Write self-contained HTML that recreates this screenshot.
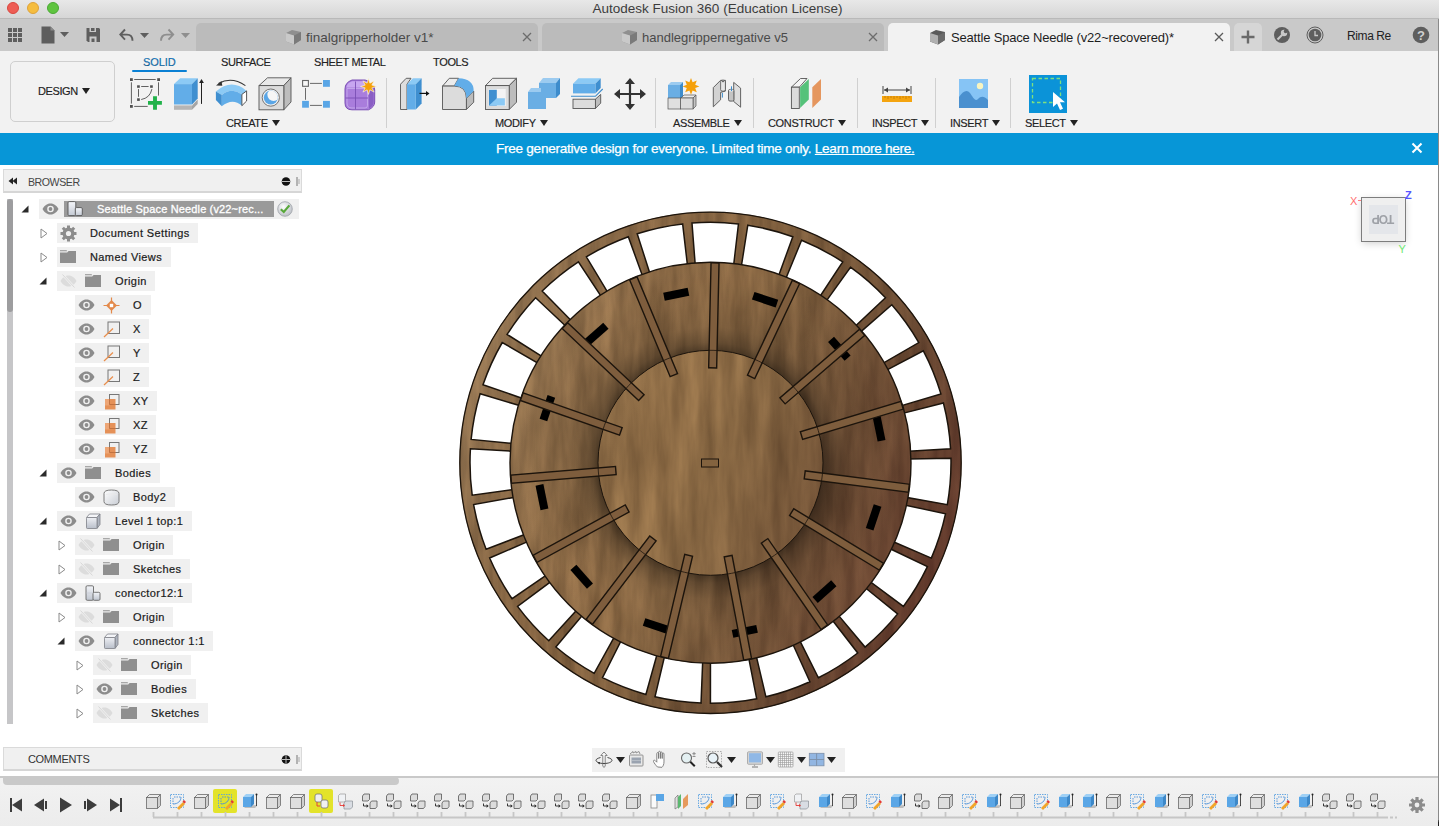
<!DOCTYPE html>
<html><head><meta charset="utf-8">
<style>
*{margin:0;padding:0;box-sizing:border-box}
html,body{width:1439px;height:826px;overflow:hidden;background:#fff;font-family:"Liberation Sans",sans-serif;position:relative}
.a{position:absolute}
#title{left:0;top:0;width:1439px;height:19px;background:linear-gradient(#e8e8e8,#d6d6d6);border-bottom:1px solid #b9b9b9}
#title .t{left:0;width:1435px;top:2px;text-align:center;font-size:13.5px;color:#3c3c3c;line-height:14px}
.tl{width:12px;height:12px;border-radius:50%;top:2px}
#tabbar{left:0;top:19px;width:1439px;height:32px;background:#c9c9c9}
.tab{top:4px;height:28px;background:#bbbbbb;border-radius:5px 5px 0 0}
.tab .n{top:7px;font-size:13px;color:#555;line-height:15px;white-space:nowrap}
#ribbon{left:0;top:51px;width:1439px;height:82px;background:#f2f2f2}
.lbl{font-size:11px;color:#222;line-height:12px;white-space:nowrap;-webkit-text-stroke:0.15px #222}
.sep{width:1px;background:#d0d0d0;top:27px;height:50px}
#banner{left:0;top:133px;width:1439px;height:32px;background:#0796d7;color:#fff}
.row{height:20px}
.rbg{background:#f0f0f0;height:20px}
.tx{font-size:11px;letter-spacing:0.4px;color:#1a1a1a;line-height:14px;white-space:nowrap;-webkit-text-stroke:0.2px #1a1a1a}
</style></head><body>

<!-- title bar -->
<div id="title" class="a">
  <div class="a tl" style="left:7px;background:#ee5d55;border:0.5px solid #d9473f"></div>
  <div class="a tl" style="left:27px;background:#f5bd3f;border:0.5px solid #dea23a"></div>
  <div class="a tl" style="left:47px;background:#5fc43f;border:0.5px solid #4aa934"></div>
  <div class="a t">Autodesk Fusion 360 (Education License)</div>
</div>

<!-- tab bar -->
<div id="tabbar" class="a">
  <!-- grid icon -->
  <svg class="a" style="left:7px;top:8px" width="16" height="16" viewBox="0 0 16 16"><g fill="#5e5e5e">
  <rect x="1" y="1" width="4" height="4"/><rect x="6" y="1" width="4" height="4"/><rect x="11" y="1" width="4" height="4"/>
  <rect x="1" y="6" width="4" height="4"/><rect x="6" y="6" width="4" height="4"/><rect x="11" y="6" width="4" height="4"/>
  <rect x="1" y="11" width="4" height="4"/><rect x="6" y="11" width="4" height="4"/><rect x="11" y="11" width="4" height="4"/></g></svg>
  <!-- file icon -->
  <svg class="a" style="left:40px;top:7px" width="30" height="18" viewBox="0 0 30 18"><path d="M1.5 0.5h9l4 4v13h-13z" fill="#5e5e5e"/><path d="M10.5 0.5v4h4" fill="#8a8a8a"/><path d="M20 6h9l-4.5 5z" fill="#5e5e5e"/></svg>
  <!-- save icon -->
  <svg class="a" style="left:85px;top:8px" width="16" height="16" viewBox="0 0 16 16"><path d="M1.5 1h12.5l1 1v13H3l-1.5-1.5z" fill="#5e5e5e"/><rect x="4.5" y="1" width="6.5" height="4" fill="#c9c9c9"/><rect x="6" y="1" width="3.5" height="3" fill="#5e5e5e"/><path d="M4.5 15V9.5h7V15M7 15v-3.5h2V15" fill="#c9c9c9"/><rect x="6.5" y="11.5" width="3" height="3.5" fill="#5e5e5e"/></svg>
  <!-- undo -->
  <svg class="a" style="left:118px;top:8px" width="36" height="16" viewBox="0 0 36 16"><path d="M7 2.5L2.3 7.6 7 12.7M2.5 7.6H9c3.5 0 5.5 2.5 5.5 6.2" fill="none" stroke="#5e5e5e" stroke-width="1.9"/><path d="M22 6h9l-4.5 5z" fill="#5e5e5e"/></svg>
  <!-- redo -->
  <svg class="a" style="left:159px;top:8px" width="36" height="16" viewBox="0 0 36 16"><path d="M9.5 2.5L14.2 7.6 9.5 12.7M14 7.6H7.5C4 7.6 2 10.1 2 13.8" fill="none" stroke="#8e8e8e" stroke-width="1.9"/><path d="M22 6h9l-4.5 5z" fill="#8e8e8e"/></svg>

  <div class="a tab" style="left:196px;width:342px">
    <svg class="a" style="left:89px;top:6px" width="17" height="16" viewBox="0 0 17 16"><path d="M1 4l6-3 9 2v8l-7 4.5-8-3z" fill="#8f8f8f"/><path d="M1 4l8 2.5v9l-8-3z" fill="#c9c9c9"/><path d="M9 6.5l7-3.5v8l-7 4.5z" fill="#7a7a7a"/></svg>
    <div class="a n" style="left:110px;font-size:13.5px;color:#4a4a4a">finalgripperholder v1*</div>
    <svg class="a" style="left:326px;top:9px" width="10" height="10" viewBox="0 0 10 10"><path d="M1 1l8 8M9 1l-8 8" stroke="#6c6c6c" stroke-width="1.3"/></svg>
  </div>
  <div class="a tab" style="left:542px;width:342px">
    <svg class="a" style="left:79px;top:6px" width="17" height="16" viewBox="0 0 17 16"><path d="M1 4l6-3 9 2v8l-7 4.5-8-3z" fill="#8f8f8f"/><path d="M1 4l8 2.5v9l-8-3z" fill="#c9c9c9"/><path d="M9 6.5l7-3.5v8l-7 4.5z" fill="#7a7a7a"/></svg>
    <div class="a n" style="left:100px;color:#4a4a4a">handlegrippernegative v5</div>
    <svg class="a" style="left:326px;top:9px" width="10" height="10" viewBox="0 0 10 10"><path d="M1 1l8 8M9 1l-8 8" stroke="#6c6c6c" stroke-width="1.3"/></svg>
  </div>
  <div class="a tab" style="left:888px;width:342px;background:#f2f2f2">
    <svg class="a" style="left:41px;top:6px" width="17" height="16" viewBox="0 0 17 16"><path d="M1 4l6-3 9 2v8l-7 4.5-8-3z" fill="#5a5a5a"/><path d="M1 4l8 2.5v9l-8-3z" fill="#b0b0b0"/><path d="M9 6.5l7-3.5v8l-7 4.5z" fill="#6a6a6a"/></svg>
    <div class="a n" style="left:63px;color:#1e1e1e;letter-spacing:-0.18px">Seattle Space Needle (v22~recovered)*</div>
    <svg class="a" style="left:326px;top:9px" width="10" height="10" viewBox="0 0 10 10"><path d="M1 1l8 8M9 1l-8 8" stroke="#5a5a5a" stroke-width="1.3"/></svg>
  </div>
  <div class="a tab" style="left:1234px;width:28px;background:#d6d6d6">
    <svg class="a" style="left:7px;top:7px" width="14" height="14" viewBox="0 0 14 14"><path d="M7 0.5v13M0.5 7h13" stroke="#6a6a6a" stroke-width="2.4"/></svg>
  </div>
  <!-- wrench -->
  <svg class="a" style="left:1273px;top:7px" width="18" height="18" viewBox="0 0 18 18"><circle cx="9" cy="9" r="8" fill="#5e5e5e"/><path d="M4.5 13.5l4.5-4.5" stroke="#c9c9c9" stroke-width="2.2"/><circle cx="11" cy="7" r="3.2" fill="#c9c9c9"/><circle cx="12.6" cy="5.4" r="1.8" fill="#5e5e5e"/></svg>
  <!-- clock -->
  <svg class="a" style="left:1306px;top:7px" width="18" height="18" viewBox="0 0 18 18"><circle cx="9" cy="9" r="8" fill="none" stroke="#5e5e5e" stroke-width="1"/><circle cx="9" cy="9" r="6.3" fill="#5e5e5e"/><path d="M9 5v4.5h3" fill="none" stroke="#c9c9c9" stroke-width="1.3"/></svg>
  <div class="a" style="left:1347px;top:10px;font-size:12px;color:#222;letter-spacing:-0.4px;line-height:14px">Rima Re</div>
  <!-- help -->
  <svg class="a" style="left:1412px;top:7px" width="18" height="18" viewBox="0 0 18 18"><circle cx="9" cy="9" r="8.3" fill="#5e5e5e"/><text x="9" y="13.6" text-anchor="middle" font-family="Liberation Sans" font-weight="bold" font-size="13" fill="#d0d0d0">?</text></svg>
</div>

<!-- ribbon -->
<div id="ribbon" class="a">
<div class="a" style="left:10px;top:10px;width:105px;height:61px;border:1px solid #cfcfcf;border-radius:5px;background:#f2f2f2"></div>
<div class="a lbl" style="left:38px;top:34px;letter-spacing:-0.4px;color:#222">DESIGN<span style="display:inline-block;width:0;height:0;border-left:4.5px solid transparent;border-right:4.5px solid transparent;border-top:6px solid #222;margin-left:4px;vertical-align:1px"></span></div>
<div class="a lbl" style="left:143px;top:5px;letter-spacing:-0.1px;color:#0b7fcf">SOLID</div>
<div class="a" style="left:132px;top:19px;width:55px;height:2.2px;background:#0a80d4;border-radius:1px"></div>
<div class="a lbl" style="left:221px;top:5px;letter-spacing:-0.35px;color:#222">SURFACE</div>
<div class="a lbl" style="left:314px;top:5px;letter-spacing:-0.35px;color:#222">SHEET METAL</div>
<div class="a lbl" style="left:433px;top:5px;letter-spacing:-0.35px;color:#222">TOOLS</div>
<svg class="a" style="left:130px;top:26px" width="33" height="34" viewBox="0 0 33 34">
<g fill="#505050"><rect x="0" y="1.2" width="2.8" height="2.8"/><rect x="27.2" y="1.2" width="2.8" height="2.8"/><rect x="0" y="28" width="2.8" height="2.8"/>
<rect x="7.1" y="8.3" width="2.7" height="2.5"/><rect x="20.1" y="8.3" width="2.7" height="2.5"/><rect x="7.1" y="21.3" width="2.7" height="2.6"/></g>
<path d="M4.2 2.5H25.7M1.4 5.3V26.6M28.5 5.3V18.6M4.2 29.4H17.7M11.2 9.5H18.6M8.5 12.1V19.8" stroke="#606060" stroke-width="1"/>
<path d="M21.9 12.1Q20 21 11.2 22.5" fill="none" stroke="#606060" stroke-width="1"/>
<path d="M25 19.2V32.8M18 25.9H31.9" stroke="#21b24a" stroke-width="3.9"/>
</svg>
<svg class="a" style="left:173px;top:26px" width="32" height="34" viewBox="0 0 32 34">
<path d="M1 7.1L7.2 1.2H24.7L19 7.1Z" fill="#8ccaf5"/><path d="M19 7.1L24.7 1.2V21.6L19 27.5Z" fill="#3f8fd0"/><rect x="1" y="7.1" width="18" height="20.4" fill="#62ade8"/>
<rect x="1" y="28.4" width="18" height="4.4" fill="#b5b5b5"/><path d="M19 28.4L24.7 22.5V26.9L19 32.8Z" fill="#a5a5a5"/>
<path d="M28.5 26.9V5" stroke="#222" stroke-width="1"/><path d="M26.1 6L28.5 2.1 30.9 6Z" fill="#222"/>
</svg>
<svg class="a" style="left:215px;top:26px" width="34" height="33" viewBox="0 0 34 33">
<path d="M3.5 6.5Q16.5 -1 30.4 8.6" fill="none" stroke="#333" stroke-width="1.1"/><path d="M1 8.5l5.5-4.5 0.8 4.8z" fill="#333"/>
<path d="M0.9 14.5Q16.5 1 31.6 13.9L26.9 17.4Q16.9 10 6.8 18Z" fill="#8ccaf5"/>
<path d="M0.9 14.5L6.8 18V29.3L0.9 23Z" fill="#3f8fd0"/>
<path d="M6.8 18Q16.9 10 26.9 17.4V28.7Q17.4 20.5 6.8 29.3Z" fill="#62ade8"/>
<path d="M26.9 17.4L31.6 13.9V24L26.9 28.7Z" fill="#fff" stroke="#444" stroke-width="0.9"/>
</svg>
<svg class="a" style="left:258px;top:26px" width="34" height="34" viewBox="0 0 34 34">
<path d="M1 8.6L9.5 0.8H33L25.8 8.6Z" fill="#e9e9e9" stroke="#555" stroke-width="0.9"/>
<path d="M25.8 8.6L33 0.8V25L25.8 32.8Z" fill="#bdbdbd" stroke="#555" stroke-width="0.9"/>
<rect x="1" y="8.6" width="24.8" height="24.2" fill="#dcdcdc" stroke="#555" stroke-width="0.9"/>
<circle cx="12.8" cy="20.6" r="8.6" fill="#f0f0f0" stroke="#666" stroke-width="0.9"/>
<defs><clipPath id="holeclip"><circle cx="12.8" cy="20.6" r="7"/></clipPath></defs><circle cx="12.8" cy="20.6" r="7" fill="#5aa6e6"/>
<circle cx="15.6" cy="17.8" r="6.2" fill="#f6f6f6" clip-path="url(#holeclip)"/>
</svg>
<svg class="a" style="left:302px;top:28px" width="30" height="30" viewBox="0 0 30 30">
<rect x="0.6" y="1.5" width="5.8" height="5.8" fill="#f8f8f8" stroke="#666" stroke-width="1.1"/><rect x="21" y="1" width="6.9" height="6.8" fill="#5aa6e6"/><rect x="0.1" y="21.9" width="6.8" height="6.8" fill="#5aa6e6"/><rect x="21" y="21.9" width="6.9" height="6.8" fill="#5aa6e6"/>
<path d="M8 4.4H19.9M3.5 9V20.8M8 26.4H19.9" stroke="#6a6a6a" stroke-width="1"/>
</svg>
<svg class="a" style="left:344px;top:26px" width="34" height="34" viewBox="0 0 34 34">
<path d="M1 12Q1 5.5 8 3H21Q24 3 25 6V9H29Q30.7 10 30.7 13V25Q30.7 30 24.5 32.8H8Q1 32.8 1 26Z" fill="#a97ddc" stroke="#7b4fb4" stroke-width="1"/>
<path d="M2.3 10.5Q3 5.5 8.5 4.2H20.5Q23 4.4 23.5 7V10.5Z" fill="#c7a6f0"/>
<path d="M24.5 10H29.6V25Q29.6 29 25 31.6Z" fill="#8a5fc4"/>
<path d="M3 11.5H23.5V28.5Q23.5 31 21 31H8Q3 31 3 26Z" fill="#a97ddc" stroke="#c9b0ee" stroke-width="0.8"/>
<path d="M11.5 4.5V32.3M1.5 21H24" stroke="#7b4fb4" stroke-width="0.9"/>
<path d="M24.50 1.60L25.88 6.17L30.09 3.91L27.83 8.12L32.40 9.50L27.83 10.88L30.09 15.09L25.88 12.83L24.50 17.40L23.12 12.83L18.91 15.09L21.17 10.88L16.60 9.50L21.17 8.12L18.91 3.91L23.12 6.17Z" fill="#f5a00a" stroke="#f7f0e0" stroke-width="0.7"/>
</svg>
<div class="a lbl" style="left:226px;top:66px;letter-spacing:-0.35px;color:#222">CREATE<span style="display:inline-block;width:0;height:0;border-left:4.5px solid transparent;border-right:4.5px solid transparent;border-top:6px solid #222;margin-left:4px;vertical-align:1px"></span></div>
<div class="a sep" style="left:386px"></div>
<svg class="a" style="left:400px;top:26px" width="32" height="34" viewBox="0 0 32 34">
<path d="M0.5 32.5V7.2L6.2 1.3H11L7 7.2V32.5Z" fill="#dedede" stroke="#555" stroke-width="0.9" stroke-linejoin="round"/>
<path d="M7 7.2L12.9 1.3H21.6L15.8 7.2Z" fill="#8ccaf5"/><path d="M15.8 7.2L21.6 1.3V26.6L15.8 32.5Z" fill="#3f8fd0"/><rect x="7" y="7.2" width="8.8" height="25.3" fill="#62ade8"/>
<path d="M19.5 16.4H27" stroke="#111" stroke-width="1.2"/><path d="M26 13.9L29.5 16.4 26 18.9Z" fill="#111"/>
</svg>
<svg class="a" style="left:441px;top:26px" width="34" height="34" viewBox="0 0 34 34">
<path d="M1.5 9.1L8.3 1.3H17.6L13.2 9.1Z" fill="#ececec" stroke="#555" stroke-width="0.9" stroke-linejoin="round"/>
<path d="M25.4 21.3L32.7 14V25.2L25.4 32.5Z" fill="#bdbdbd" stroke="#555" stroke-width="0.9" stroke-linejoin="round"/>
<path d="M1.5 9.1H13.2Q25.4 9.1 25.4 21.3V32.5H1.5Z" fill="#dcdcdc" stroke="#555" stroke-width="0.9" stroke-linejoin="round"/>
<path d="M13.2 9.1L17.6 1.3Q32.7 1.8 32.7 14L25.4 21.3Q25.4 9.1 13.2 9.1Z" fill="#62ade8"/>
</svg>
<svg class="a" style="left:485px;top:26px" width="33" height="34" viewBox="0 0 33 34">
<path d="M0.5 8.6L7.6 1.3H31.5L24.2 8.6Z" fill="#ececec" stroke="#555" stroke-width="0.9" stroke-linejoin="round"/>
<path d="M24.2 8.6L31.5 1.3V25.2L24.2 32.5Z" fill="#bdbdbd" stroke="#555" stroke-width="0.9" stroke-linejoin="round"/>
<rect x="0.5" y="8.6" width="23.7" height="23.9" fill="#dcdcdc" stroke="#555" stroke-width="0.9"/>
<rect x="3.7" y="12" width="17" height="17" fill="#f4f4f4"/><rect x="4" y="12.8" width="7.8" height="15.8" fill="#3f8fd0"/><path d="M4 28.6L11.8 21.3H19.9V28.6Z" fill="#8ccaf5"/>
</svg>
<svg class="a" style="left:527px;top:26px" width="34" height="33" viewBox="0 0 34 33"><path d="M12 6l4-5h17l-4 5z" fill="#9ccbf0"/><path d="M29 6l4-5v16l-4 4z" fill="#3d8ccc"/><rect x="12" y="6" width="17" height="15" fill="#6aaee4"/>
<path d="M1 15l3-4h10v4z" fill="#9ccbf0"/><path d="M19 21l-4 5v6l4-5z" fill="#3d8ccc"/><rect x="1" y="15" width="18" height="17" fill="#6aaee4"/></svg>
<svg class="a" style="left:571px;top:26px" width="33" height="33" viewBox="0 0 33 33">
<path d="M2 6.7L7.4 1.3H29.7L24.4 6.7Z" fill="#8ccaf5"/><path d="M24.4 6.7L29.7 1.3V11L24.4 16.4Z" fill="#3f8fd0"/><rect x="2" y="6.7" width="22.4" height="9.7" fill="#62ade8"/>
<path d="M0 19.3H24.4L31.7 12" fill="none" stroke="#3d8ccc" stroke-width="1.1"/>
<path d="M24.4 22.2L29.7 17.4V26.1L24.4 31.5Z" fill="#bdbdbd" stroke="#555" stroke-width="0.9" stroke-linejoin="round"/><rect x="2" y="22.2" width="22.4" height="9.3" fill="#dcdcdc" stroke="#555" stroke-width="0.9"/>
</svg>
<svg class="a" style="left:614px;top:27px" width="32" height="32" viewBox="0 0 32 32"><path d="M16 3v26M3 16h26" stroke="#333" stroke-width="2.2"/><path d="M16 0l5 6H11zM16 32l5-6H11zM0 16l6-5v10zM32 16l-6-5v10z" fill="#333"/></svg>
<div class="a lbl" style="left:495px;top:66px;letter-spacing:-0.35px;color:#222">MODIFY<span style="display:inline-block;width:0;height:0;border-left:4.5px solid transparent;border-right:4.5px solid transparent;border-top:6px solid #222;margin-left:4px;vertical-align:1px"></span></div>
<div class="a sep" style="left:655px"></div>
<svg class="a" style="left:667px;top:26px" width="33" height="33" viewBox="0 0 33 33"><path d="M1 8l3-3h12l-3 3z" fill="#9ccbf0"/><path d="M13 8l3-3v15l-3 3z" fill="#3d8ccc"/><rect x="1" y="8" width="12" height="15" fill="#6aaee4"/>
<path d="M14 21l3-3h12l-3 3z" fill="#ececec" stroke="#555" stroke-width="0.7"/><path d="M26 21l3-3v11l-3 3z" fill="#c4c4c4" stroke="#555" stroke-width="0.7"/>
<rect x="1" y="21" width="12.5" height="11" fill="#e0e0e0" stroke="#555" stroke-width="0.7"/><rect x="13.5" y="21" width="12.5" height="11" fill="#dcdcdc" stroke="#555" stroke-width="0.7"/>
<path d="M24 1l1.6 4.2 4.2-1.6-1.6 4.2 4.2 1.6-4.2 1.6 1.6 4.2-4.2-1.6L24 17.8l-1.6-4.2-4.2 1.6 1.6-4.2-4.2-1.6 4.2-1.6-1.6-4.2 4.2 1.6z" fill="#f5a00a"/></svg>
<svg class="a" style="left:712px;top:26px" width="30" height="33" viewBox="0 0 30 33">
<path d="M1.3 29.8V10.6L8.6 3.3H13.4V14.1L8.6 15.4V22.8Z" fill="#d2d2d2" stroke="#555" stroke-width="0.9" stroke-linejoin="round"/>
<rect x="8.6" y="3.3" width="4.8" height="10.8" rx="1.5" fill="#e6e6e6" stroke="#555" stroke-width="0.8"/><ellipse cx="11" cy="4.6" rx="1.2" ry="0.7" fill="#555"/>
<path d="M10.4 15.9V20.6" stroke="#3d8ccc" stroke-width="1"/>
<path d="M21.7 5.4L28.6 11.1V30.2L21.7 24.5Z" fill="#dedede" stroke="#555" stroke-width="0.9" stroke-linejoin="round"/>
<rect x="16.5" y="12.4" width="5.4" height="11.7" rx="1.5" fill="#c4c4c4" stroke="#555" stroke-width="0.9"/><ellipse cx="19.2" cy="13.6" rx="2.3" ry="1.1" fill="#e8e8e8"/>
<path d="M19.5 9.3V14.1" stroke="#3d8ccc" stroke-width="1"/>
</svg>
<div class="a lbl" style="left:673px;top:66px;letter-spacing:-0.35px;color:#222">ASSEMBLE<span style="display:inline-block;width:0;height:0;border-left:4.5px solid transparent;border-right:4.5px solid transparent;border-top:6px solid #222;margin-left:4px;vertical-align:1px"></span></div>
<div class="a sep" style="left:753px"></div>
<svg class="a" style="left:790px;top:26px" width="32" height="33" viewBox="0 0 32 33">
<path d="M1.4 10.2L10.5 1.5H17L9.3 10.2Z" fill="#f4f4f4" stroke="#555" stroke-width="0.9" stroke-linejoin="round"/>
<rect x="1.4" y="10.2" width="7.9" height="21.3" fill="#dcdcdc" stroke="#555" stroke-width="0.9"/>
<path d="M10.1 10.2L18.8 2V22.4L10.1 31.1Z" fill="#55c27a"/>
<path d="M22.3 10.2L31 2V22.4L22.3 31.1Z" fill="#e5965e"/>
</svg>
<div class="a lbl" style="left:768px;top:66px;letter-spacing:-0.35px;color:#222">CONSTRUCT<span style="display:inline-block;width:0;height:0;border-left:4.5px solid transparent;border-right:4.5px solid transparent;border-top:6px solid #222;margin-left:4px;vertical-align:1px"></span></div>
<div class="a sep" style="left:857px"></div>
<svg class="a" style="left:882px;top:34px" width="30" height="18" viewBox="0 0 30 18"><path d="M1 1v8M29 1v8M2 5h26" stroke="#444" stroke-width="1"/><path d="M2 5l4-2.5v5zM28 5l-4-2.5v5z" fill="#444"/>
<rect x="0" y="11" width="30" height="6" fill="#f4a40f"/><path d="M3 11v2M6 11v3M9 11v2M12 11v3M15 11v2M18 11v3M21 11v2M24 11v3M27 11v2" stroke="#c07a05" stroke-width="0.8"/></svg>
<div class="a lbl" style="left:872px;top:66px;letter-spacing:-0.35px;color:#222">INSPECT<span style="display:inline-block;width:0;height:0;border-left:4.5px solid transparent;border-right:4.5px solid transparent;border-top:6px solid #222;margin-left:4px;vertical-align:1px"></span></div>
<div class="a sep" style="left:935px"></div>
<svg class="a" style="left:959px;top:28px" width="29" height="29" viewBox="0 0 29 29"><rect x="0" y="0" width="29" height="29" fill="#86c4f5"/><path d="M0 18c4-6 8-8 11-4 3 4 5 9 8 6 3-3 6-3 10 1v8H0z" fill="#4a90cf"/><circle cx="21" cy="7" r="3.2" fill="#f8f4c0"/></svg>
<div class="a lbl" style="left:950px;top:66px;letter-spacing:-0.35px;color:#222">INSERT<span style="display:inline-block;width:0;height:0;border-left:4.5px solid transparent;border-right:4.5px solid transparent;border-top:6px solid #222;margin-left:4px;vertical-align:1px"></span></div>
<div class="a sep" style="left:1010px"></div>
<svg class="a" style="left:1029px;top:24px" width="38" height="38" viewBox="0 0 38 38"><rect x="0" y="0" width="38" height="38" fill="#0b93d8"/><rect x="3.5" y="3.5" width="28" height="24" fill="none" stroke="#7fe07f" stroke-width="1.3" stroke-dasharray="3.5 2.5"/>
<path d="M24 17v15l4-3.5 3 6.5 3-1.3-3-6.5h5z" fill="#fff"/></svg>
<div class="a lbl" style="left:1025px;top:66px;letter-spacing:-0.35px;color:#222">SELECT<span style="display:inline-block;width:0;height:0;border-left:4.5px solid transparent;border-right:4.5px solid transparent;border-top:6px solid #222;margin-left:4px;vertical-align:1px"></span></div>
</div>

<!-- banner -->
<div id="banner" class="a">
  <div class="a" style="left:496px;top:8px;font-size:13.6px;line-height:16px;letter-spacing:-0.28px;white-space:nowrap;-webkit-text-stroke:0.25px #fff">Free generative design for everyone. Limited time only. <u>Learn more here.</u></div>
  <svg class="a" style="left:1411px;top:9px" width="12" height="12" viewBox="0 0 12 12"><path d="M1.5 1.5l9 9M10.5 1.5l-9 9" stroke="#fff" stroke-width="2.1"/></svg>
</div>

<!-- WHEEL START -->
<svg class="a" style="left:0;top:0" width="1439" height="826" viewBox="0 0 1439 826">
<defs>
<filter id="wA" x="455" y="205" width="512" height="516" filterUnits="userSpaceOnUse" color-interpolation-filters="sRGB">
 <feTurbulence type="fractalNoise" baseFrequency="0.08 0.012" numOctaves="4" seed="3"/>
 <feColorMatrix type="matrix" values="0.26 0 0 0 0.3900  0.21 0 0 0 0.2850  0.15 0 0 0 0.1800  0 0 0 0 1"/>
</filter>
<filter id="wB" x="455" y="205" width="512" height="516" filterUnits="userSpaceOnUse" color-interpolation-filters="sRGB">
 <feTurbulence type="fractalNoise" baseFrequency="0.075 0.011" numOctaves="4" seed="11"/>
 <feColorMatrix type="matrix" values="0.26 0 0 0 0.4200  0.21 0 0 0 0.3100  0.15 0 0 0 0.1950  0 0 0 0 1"/>
</filter>
<filter id="wC" x="455" y="205" width="512" height="516" filterUnits="userSpaceOnUse" color-interpolation-filters="sRGB">
 <feTurbulence type="fractalNoise" baseFrequency="0.07 0.01" numOctaves="4" seed="21"/>
 <feColorMatrix type="matrix" values="0.24 0 0 0 0.4500  0.2 0 0 0 0.3350  0.14 0 0 0 0.2100  0 0 0 0 1"/>
</filter>
<linearGradient id="light" x1="480" y1="380" x2="940" y2="560" gradientUnits="userSpaceOnUse">
 <stop offset="0" stop-color="#fff0c8" stop-opacity="0.12"/>
 <stop offset="0.42" stop-color="#000" stop-opacity="0"/>
 <stop offset="1" stop-color="#3a0a14" stop-opacity="0.46"/>
</linearGradient>
<radialGradient id="midshade" cx="710.5" cy="462.8" r="200.5" gradientUnits="userSpaceOnUse">
 <stop offset="0.56" stop-color="#000" stop-opacity="0.45"/>
 <stop offset="0.6" stop-color="#000" stop-opacity="0.28"/>
 <stop offset="0.68" stop-color="#000" stop-opacity="0.1"/>
 <stop offset="0.8" stop-color="#000" stop-opacity="0.02"/>
 <stop offset="1" stop-color="#000" stop-opacity="0"/>
</radialGradient>
<clipPath id="cOut"><circle cx="710.5" cy="462.8" r="251.0"/></clipPath>
<clipPath id="cMid"><circle cx="710.5" cy="462.8" r="200.5"/></clipPath>
<clipPath id="cIn"><circle cx="710.5" cy="462.8" r="112.5"/></clipPath>
</defs>
<g clip-path="url(#cOut)"><rect x="455" y="205" width="512" height="516" filter="url(#wA)"/></g>
<circle cx="710.5" cy="462.8" r="250.7" fill="url(#light)" stroke="#1c140c" stroke-width="1.3"/>
<path d="M741.28 266.70 L747.79 225.21 A240.5 240.5 0 0 1 792.81 236.82 L778.43 276.29 Z M785.67 279.08 L801.58 240.21 A240.5 240.5 0 0 1 842.70 261.90 L819.62 296.98 Z M826.01 301.37 L850.46 267.22 A240.5 240.5 0 0 1 885.47 297.80 L854.92 326.61 Z M860.13 332.36 L891.79 304.76 A240.5 240.5 0 0 1 918.81 342.60 L882.43 363.59 Z M886.18 370.39 L923.35 350.83 A240.5 240.5 0 0 1 940.91 393.88 L900.67 405.91 Z M902.75 413.39 L943.43 402.94 A240.5 240.5 0 0 1 950.60 448.87 L908.67 451.30 Z M908.96 459.06 L950.96 458.27 A240.5 240.5 0 0 1 947.34 504.62 L905.98 497.31 Z M904.48 504.93 L945.52 513.84 A240.5 240.5 0 0 1 931.31 558.11 L892.75 541.46 Z M889.53 548.53 L927.41 566.67 A240.5 240.5 0 0 1 903.38 606.46 L869.69 581.37 Z M864.94 587.50 L897.61 613.89 A240.5 240.5 0 0 1 865.05 647.07 L838.06 614.89 Z M832.02 619.76 L857.73 652.97 A240.5 240.5 0 0 1 818.39 677.74 L799.55 640.21 Z M792.54 643.55 L809.90 681.80 A240.5 240.5 0 0 1 765.91 696.83 L756.23 655.96 Z M748.65 657.60 L756.72 698.82 A240.5 240.5 0 0 1 710.44 703.30 L710.45 661.30 Z M702.70 661.15 L701.04 703.11 A240.5 240.5 0 0 1 654.98 696.80 L664.68 655.94 Z M657.16 654.00 L645.88 694.46 A240.5 240.5 0 0 1 602.51 677.69 L621.37 640.17 Z M614.51 636.55 L594.20 673.31 A240.5 240.5 0 0 1 555.87 647.00 L582.87 614.83 Z M577.03 609.73 L548.79 640.81 A240.5 240.5 0 0 1 517.56 606.37 L551.25 581.30 Z M546.74 574.98 L512.09 598.72 A240.5 240.5 0 0 1 489.65 558.01 L528.22 541.38 Z M525.28 534.19 L486.09 549.30 A240.5 240.5 0 0 1 473.64 504.51 L515.01 497.22 Z M513.81 489.56 L472.19 495.22 A240.5 240.5 0 0 1 470.41 448.76 L512.34 451.21 Z M512.94 443.48 L471.14 439.39 A240.5 240.5 0 0 1 480.12 393.77 L520.35 405.83 Z M522.72 398.44 L482.99 384.82 A240.5 240.5 0 0 1 502.25 342.50 L538.62 363.51 Z M542.63 356.87 L507.11 334.45 A240.5 240.5 0 0 1 535.61 297.72 L566.15 326.55 Z M571.58 321.01 L542.19 291.01 A240.5 240.5 0 0 1 578.39 261.83 L601.46 296.93 Z M608.03 292.80 L586.35 256.82 A240.5 240.5 0 0 1 628.30 236.78 L642.65 276.26 Z M650.00 273.75 L637.19 233.74 A240.5 240.5 0 0 1 682.64 223.92 L687.50 265.64 Z M695.23 264.89 L691.99 223.01 A240.5 240.5 0 0 1 738.48 223.93 L733.59 265.65 Z" fill="#fff" stroke="#1c140c" stroke-width="1.5"/>
<g clip-path="url(#cMid)"><rect x="455" y="205" width="512" height="516" filter="url(#wB)"/></g>
<circle cx="710.5" cy="462.8" r="200.5" fill="url(#light)"/>
<circle cx="710.5" cy="462.8" r="200.5" fill="url(#midshade)" stroke="#1c140c" stroke-width="1.4"/>
<g clip-path="url(#cIn)"><rect x="455" y="205" width="512" height="516" filter="url(#wC)"/></g>
<circle cx="710.5" cy="462.8" r="112.5" fill="url(#light)" stroke="#1c140c" stroke-width="1"/>
<rect x="752.58" y="295.69" width="25" height="8" fill="#000" transform="rotate(18.50 765.08 299.69)"/>
<rect x="826.82" y="344.83" width="25" height="8" fill="#000" transform="rotate(48.50 839.32 348.83)"/>
<rect x="866.55" y="424.51" width="25" height="8" fill="#000" transform="rotate(78.50 879.05 428.51)"/>
<rect x="861.11" y="513.38" width="25" height="8" fill="#000" transform="rotate(108.50 873.61 517.38)"/>
<rect x="811.97" y="587.62" width="25" height="8" fill="#000" transform="rotate(138.50 824.47 591.62)"/>
<rect x="732.29" y="627.35" width="25" height="8" fill="#000" transform="rotate(168.50 744.79 631.35)"/>
<rect x="643.42" y="621.91" width="25" height="8" fill="#000" transform="rotate(198.50 655.92 625.91)"/>
<rect x="569.18" y="572.77" width="25" height="8" fill="#000" transform="rotate(228.50 581.68 576.77)"/>
<rect x="529.45" y="493.09" width="25" height="8" fill="#000" transform="rotate(258.50 541.95 497.09)"/>
<rect x="534.89" y="404.22" width="25" height="8" fill="#000" transform="rotate(288.50 547.39 408.22)"/>
<rect x="584.03" y="329.98" width="25" height="8" fill="#000" transform="rotate(318.50 596.53 333.98)"/>
<rect x="663.71" y="290.25" width="25" height="8" fill="#000" transform="rotate(348.50 676.21 294.25)"/>
<rect x="709.85" y="262.84" width="8" height="105" fill="#7e5d3d" stroke="#1c140c" stroke-width="1.4" transform="rotate(1.30 713.85 315.34)"/>
<path d="M708.93 350.31 A112.5 112.5 0 0 1 717.17 350.50" fill="none" stroke="#1c140c" stroke-width="0.8"/>
<rect x="769.54" y="276.95" width="8" height="105" fill="#7e5d3d" stroke="#1c140c" stroke-width="1.4" transform="rotate(25.30 773.54 329.45)"/>
<path d="M754.82 359.40 A112.5 112.5 0 0 1 762.27 362.92" fill="none" stroke="#1c140c" stroke-width="0.8"/>
<rect x="818.32" y="314.12" width="8" height="105" fill="#7e5d3d" stroke="#1c140c" stroke-width="1.4" transform="rotate(49.30 822.32 366.62)"/>
<path d="M793.04 386.36 A112.5 112.5 0 0 1 798.42 392.61" fill="none" stroke="#1c140c" stroke-width="0.8"/>
<rect x="847.78" y="367.91" width="8" height="105" fill="#7e5d3d" stroke="#1c140c" stroke-width="1.4" transform="rotate(73.30 851.78 420.41)"/>
<path d="M817.00 426.55 A112.5 112.5 0 0 1 819.37 434.44" fill="none" stroke="#1c140c" stroke-width="0.8"/>
<rect x="852.80" y="429.04" width="8" height="105" fill="#7e5d3d" stroke="#1c140c" stroke-width="1.4" transform="rotate(97.30 856.80 481.54)"/>
<path d="M822.54 473.00 A112.5 112.5 0 0 1 821.49 481.17" fill="none" stroke="#1c140c" stroke-width="0.8"/>
<rect x="832.53" y="486.93" width="8" height="105" fill="#7e5d3d" stroke="#1c140c" stroke-width="1.4" transform="rotate(121.30 836.53 539.43)"/>
<path d="M808.70 517.68 A112.5 112.5 0 0 1 804.42 524.73" fill="none" stroke="#1c140c" stroke-width="0.8"/>
<rect x="790.47" y="531.57" width="8" height="105" fill="#7e5d3d" stroke="#1c140c" stroke-width="1.4" transform="rotate(145.30 794.47 584.07)"/>
<path d="M777.89 552.88 A112.5 112.5 0 0 1 771.11 557.58" fill="none" stroke="#1c140c" stroke-width="0.8"/>
<rect x="733.89" y="555.24" width="8" height="105" fill="#7e5d3d" stroke="#1c140c" stroke-width="1.4" transform="rotate(169.30 737.89 607.74)"/>
<path d="M735.42 572.50 A112.5 112.5 0 0 1 727.32 574.04" fill="none" stroke="#1c140c" stroke-width="0.8"/>
<rect x="672.57" y="553.84" width="8" height="105" fill="#7e5d3d" stroke="#1c140c" stroke-width="1.4" transform="rotate(193.30 676.57 606.34)"/>
<path d="M688.65 573.16 A112.5 112.5 0 0 1 680.62 571.26" fill="none" stroke="#1c140c" stroke-width="0.8"/>
<rect x="617.12" y="527.63" width="8" height="105" fill="#7e5d3d" stroke="#1c140c" stroke-width="1.4" transform="rotate(217.30 621.12 580.13)"/>
<path d="M645.65 554.73 A112.5 112.5 0 0 1 639.09 549.73" fill="none" stroke="#1c140c" stroke-width="0.8"/>
<rect x="577.12" y="481.13" width="8" height="105" fill="#7e5d3d" stroke="#1c140c" stroke-width="1.4" transform="rotate(241.30 581.12 533.63)"/>
<path d="M613.87 520.40 A112.5 112.5 0 0 1 609.91 513.17" fill="none" stroke="#1c140c" stroke-width="0.8"/>
<rect x="559.50" y="422.39" width="8" height="105" fill="#7e5d3d" stroke="#1c140c" stroke-width="1.4" transform="rotate(265.30 563.50 474.89)"/>
<path d="M598.79 476.12 A112.5 112.5 0 0 1 598.12 467.90" fill="none" stroke="#1c140c" stroke-width="0.8"/>
<rect x="567.29" y="361.55" width="8" height="105" fill="#7e5d3d" stroke="#1c140c" stroke-width="1.4" transform="rotate(289.30 571.29 414.05)"/>
<path d="M603.03 429.53 A112.5 112.5 0 0 1 605.76 421.75" fill="none" stroke="#1c140c" stroke-width="0.8"/>
<rect x="599.15" y="309.14" width="8" height="105" fill="#7e5d3d" stroke="#1c140c" stroke-width="1.4" transform="rotate(313.30 603.15 361.64)"/>
<path d="M625.85 388.70 A112.5 112.5 0 0 1 631.51 382.70" fill="none" stroke="#1c140c" stroke-width="0.8"/>
<rect x="649.58" y="274.23" width="8" height="105" fill="#7e5d3d" stroke="#1c140c" stroke-width="1.4" transform="rotate(337.30 653.58 326.73)"/>
<path d="M663.31 360.68 A112.5 112.5 0 0 1 670.92 357.49" fill="none" stroke="#1c140c" stroke-width="0.8"/>
<rect x="701.5" y="459" width="17" height="8" fill="#83633f" stroke="#1c140c" stroke-width="1"/>
</svg>
<!-- WHEEL END -->
<!-- BROWSER START -->
<div class="a" style="left:3px;top:169px;width:299px;height:24px;background:#f0f0f0;border:1px solid #dadada;border-bottom:2px solid #d6d6d6"></div>
<svg class="a" style="left:8px;top:177px" width="10" height="8" viewBox="0 0 10 8"><path d="M0.5 4L5 0.5v7zM4.5 4L9 0.5v7z" fill="#222"/></svg>
<div class="a" style="left:28px;top:175.5px;font-size:10.6px;letter-spacing:-0.45px;color:#454545;line-height:13px">BROWSER</div>
<svg class="a" style="left:281px;top:176px" width="20" height="11" viewBox="0 0 20 11"><circle cx="5" cy="5.5" r="4.3" fill="#111"/><path d="M1 5.5h8" stroke="#bbb" stroke-width="1"/><path d="M16 1v9" stroke="#777" stroke-width="1"/><path d="M18 3v5" stroke="#aaa" stroke-width="1"/></svg>
<div class="a" style="left:7px;top:199px;width:6px;height:525px;background:#c6c6c8"></div>
<div class="a" style="left:7px;top:199px;width:6px;height:113px;background:#9d9d9f;border-radius:3px"></div>
<div class="a" style="left:39px;top:199px;width:260px;height:20px;background:#f0f0f0"></div>
<div class="a" style="left:64px;top:201px;width:210px;height:16px;background:#9a9a9a"></div>
<svg class="a" style="left:21px;top:205px" width="8" height="8" viewBox="0 0 8 8"><path d="M0.5 7.5L7.5 0.5V7.5z" fill="#2a2a2a"/></svg>
<svg class="a" style="left:42px;top:203px" width="17" height="12" viewBox="0 0 17 12"><path d="M0.5 6C3 1.8 5.5 0.5 8.5 0.5S14 1.8 16.5 6C14 10.2 11.5 11.5 8.5 11.5S3 10.2 0.5 6z" fill="#8c8c8c"/><circle cx="8.5" cy="6" r="3.3" fill="#f0f0f0"/><circle cx="8.5" cy="6" r="1.9" fill="#8c8c8c"/></svg>
<svg class="a" style="left:67px;top:201px" width="17" height="16" viewBox="0 0 17 16"><defs><linearGradient id="rtg" x1="0" y1="0" x2="0" y2="1"><stop offset="0" stop-color="#f4f6fa"/><stop offset="1" stop-color="#c4cad4"/></linearGradient></defs><rect x="1" y="0.6" width="7.8" height="14" rx="1.2" fill="url(#rtg)" stroke="#555" stroke-width="0.9"/><rect x="8.3" y="6.6" width="7" height="8" rx="1.2" fill="url(#rtg)" stroke="#555" stroke-width="0.9"/></svg>
<div class="a tx" style="left:97px;top:202px;color:#fff;letter-spacing:0.15px;-webkit-text-stroke:0.3px #fff">Seattle Space Needle (v22~rec...</div>
<svg class="a" style="left:277px;top:201px" width="16" height="16" viewBox="0 0 16 16"><defs><radialGradient id="cg" cx="0.4" cy="0.35" r="0.7"><stop offset="0" stop-color="#fdfdfd"/><stop offset="1" stop-color="#b9bdc4"/></radialGradient></defs><circle cx="8" cy="8" r="7.3" fill="url(#cg)" stroke="#9ea2a8" stroke-width="0.8"/><path d="M3.8 8.2l3 2.8 5.6-6.6" fill="none" stroke="#58a83a" stroke-width="2.2"/></svg>
<div class="a" style="left:57px;top:223px;width:141px;height:20px;background:#f0f0f0"></div>
<svg class="a" style="left:40px;top:228px" width="8" height="11" viewBox="0 0 8 11"><path d="M1 1l6 4.5L1 10z" fill="#fff" stroke="#8a8a8a" stroke-width="1"/></svg>
<svg class="a" style="left:60px;top:225px" width="17" height="17" viewBox="0 0 17 17"><g fill="#8c8c8c"><circle cx="8.5" cy="8.5" r="6"/><g stroke="#8c8c8c" stroke-width="3"><path d="M8.5 0.5v16M0.5 8.5h16M2.8 2.8l11.4 11.4M14.2 2.8L2.8 14.2"/></g></g><circle cx="8.5" cy="8.5" r="2.6" fill="#f0f0f0"/></svg>
<div class="a tx" style="left:90px;top:226px">Document Settings</div>
<div class="a" style="left:57px;top:247px;width:114px;height:20px;background:#f0f0f0"></div>
<svg class="a" style="left:40px;top:252px" width="8" height="11" viewBox="0 0 8 11"><path d="M1 1l6 4.5L1 10z" fill="#fff" stroke="#8a8a8a" stroke-width="1"/></svg>
<svg class="a" style="left:60px;top:250px" width="17" height="13" viewBox="0 0 17 13"><path d="M0 0.3H6.5L7.3 1.3H0Z" fill="#8f8f8f"/><path d="M0 2.6H7.2L8.6 1.1H16V13H0Z" fill="#8f8f8f"/></svg>
<div class="a tx" style="left:90px;top:250px">Named Views</div>
<div class="a" style="left:57px;top:271px;width:98px;height:20px;background:#f0f0f0"></div>
<svg class="a" style="left:39px;top:277px" width="8" height="8" viewBox="0 0 8 8"><path d="M0.5 7.5L7.5 0.5V7.5z" fill="#2a2a2a"/></svg>
<svg class="a" style="left:60px;top:274px" width="17" height="14" viewBox="0 0 17 14"><path d="M0.5 7C3 2.8 5.5 1.5 8.5 1.5S14 2.8 16.5 7C14 11.2 11.5 12.5 8.5 12.5S3 11.2 0.5 7z" fill="#dcdcdc"/><path d="M2.5 0.5l12 13" stroke="#f0f0f0" stroke-width="2.4"/><path d="M2.5 0.5l12 13" stroke="#d4d4d4" stroke-width="0.9"/></svg>
<svg class="a" style="left:85px;top:274px" width="17" height="13" viewBox="0 0 17 13"><path d="M0 0.3H6.5L7.3 1.3H0Z" fill="#8f8f8f"/><path d="M0 2.6H7.2L8.6 1.1H16V13H0Z" fill="#8f8f8f"/></svg>
<div class="a tx" style="left:115px;top:274px">Origin</div>
<div class="a" style="left:75px;top:295px;width:76px;height:20px;background:#f0f0f0"></div>
<svg class="a" style="left:78px;top:299px" width="17" height="12" viewBox="0 0 17 12"><path d="M0.5 6C3 1.8 5.5 0.5 8.5 0.5S14 1.8 16.5 6C14 10.2 11.5 11.5 8.5 11.5S3 10.2 0.5 6z" fill="#8c8c8c"/><circle cx="8.5" cy="6" r="3.3" fill="#f0f0f0"/><circle cx="8.5" cy="6" r="1.9" fill="#8c8c8c"/></svg>
<svg class="a" style="left:103px;top:297px" width="17" height="17" viewBox="0 0 17 17"><path d="M8.5 0.5v16M0.5 8.5h16" stroke="#e3894a" stroke-width="1.2"/><path d="M8.5 3L14 8.5 8.5 14 3 8.5z" fill="#e3894a"/><rect x="6.8" y="6.8" width="3.4" height="3.4" fill="#fff"/></svg>
<div class="a tx" style="left:133px;top:298px">O</div>
<div class="a" style="left:75px;top:319px;width:74px;height:20px;background:#f0f0f0"></div>
<svg class="a" style="left:78px;top:323px" width="17" height="12" viewBox="0 0 17 12"><path d="M0.5 6C3 1.8 5.5 0.5 8.5 0.5S14 1.8 16.5 6C14 10.2 11.5 11.5 8.5 11.5S3 10.2 0.5 6z" fill="#8c8c8c"/><circle cx="8.5" cy="6" r="3.3" fill="#f0f0f0"/><circle cx="8.5" cy="6" r="1.9" fill="#8c8c8c"/></svg>
<svg class="a" style="left:103px;top:321px" width="17" height="17" viewBox="0 0 17 17"><rect x="5" y="1" width="11.5" height="11.5" fill="none" stroke="#777" stroke-width="1"/><path d="M1 16L10 7.5" stroke="#e98e4c" stroke-width="1.2"/></svg>
<div class="a tx" style="left:133px;top:322px">X</div>
<div class="a" style="left:75px;top:343px;width:74px;height:20px;background:#f0f0f0"></div>
<svg class="a" style="left:78px;top:347px" width="17" height="12" viewBox="0 0 17 12"><path d="M0.5 6C3 1.8 5.5 0.5 8.5 0.5S14 1.8 16.5 6C14 10.2 11.5 11.5 8.5 11.5S3 10.2 0.5 6z" fill="#8c8c8c"/><circle cx="8.5" cy="6" r="3.3" fill="#f0f0f0"/><circle cx="8.5" cy="6" r="1.9" fill="#8c8c8c"/></svg>
<svg class="a" style="left:103px;top:345px" width="17" height="17" viewBox="0 0 17 17"><rect x="5" y="1" width="11.5" height="11.5" fill="none" stroke="#777" stroke-width="1"/><path d="M1 16L10 7.5" stroke="#e98e4c" stroke-width="1.2"/></svg>
<div class="a tx" style="left:133px;top:346px">Y</div>
<div class="a" style="left:75px;top:367px;width:74px;height:20px;background:#f0f0f0"></div>
<svg class="a" style="left:78px;top:371px" width="17" height="12" viewBox="0 0 17 12"><path d="M0.5 6C3 1.8 5.5 0.5 8.5 0.5S14 1.8 16.5 6C14 10.2 11.5 11.5 8.5 11.5S3 10.2 0.5 6z" fill="#8c8c8c"/><circle cx="8.5" cy="6" r="3.3" fill="#f0f0f0"/><circle cx="8.5" cy="6" r="1.9" fill="#8c8c8c"/></svg>
<svg class="a" style="left:103px;top:369px" width="17" height="17" viewBox="0 0 17 17"><rect x="5" y="1" width="11.5" height="11.5" fill="none" stroke="#777" stroke-width="1"/><path d="M1 16L10 7.5" stroke="#e98e4c" stroke-width="1.2"/></svg>
<div class="a tx" style="left:133px;top:370px">Z</div>
<div class="a" style="left:75px;top:391px;width:82px;height:20px;background:#f0f0f0"></div>
<svg class="a" style="left:78px;top:395px" width="17" height="12" viewBox="0 0 17 12"><path d="M0.5 6C3 1.8 5.5 0.5 8.5 0.5S14 1.8 16.5 6C14 10.2 11.5 11.5 8.5 11.5S3 10.2 0.5 6z" fill="#8c8c8c"/><circle cx="8.5" cy="6" r="3.3" fill="#f0f0f0"/><circle cx="8.5" cy="6" r="1.9" fill="#8c8c8c"/></svg>
<svg class="a" style="left:103px;top:393px" width="17" height="17" viewBox="0 0 17 17"><rect x="6.5" y="1.5" width="9.5" height="10" fill="none" stroke="#777" stroke-width="1"/><rect x="2" y="6" width="10.5" height="10.5" fill="#e59158"/><rect x="2" y="6" width="4.5" height="6.5" fill="#f2b48a" opacity="0.6"/><path d="M6.5 6v5.5h6" fill="none" stroke="#b86a3a" stroke-width="0.8"/></svg>
<div class="a tx" style="left:133px;top:394px">XY</div>
<div class="a" style="left:75px;top:415px;width:81px;height:20px;background:#f0f0f0"></div>
<svg class="a" style="left:78px;top:419px" width="17" height="12" viewBox="0 0 17 12"><path d="M0.5 6C3 1.8 5.5 0.5 8.5 0.5S14 1.8 16.5 6C14 10.2 11.5 11.5 8.5 11.5S3 10.2 0.5 6z" fill="#8c8c8c"/><circle cx="8.5" cy="6" r="3.3" fill="#f0f0f0"/><circle cx="8.5" cy="6" r="1.9" fill="#8c8c8c"/></svg>
<svg class="a" style="left:103px;top:417px" width="17" height="17" viewBox="0 0 17 17"><rect x="6.5" y="1.5" width="9.5" height="10" fill="none" stroke="#777" stroke-width="1"/><rect x="2" y="6" width="10.5" height="10.5" fill="#e59158"/><rect x="2" y="6" width="4.5" height="6.5" fill="#f2b48a" opacity="0.6"/><path d="M6.5 6v5.5h6" fill="none" stroke="#b86a3a" stroke-width="0.8"/></svg>
<div class="a tx" style="left:133px;top:418px">XZ</div>
<div class="a" style="left:75px;top:439px;width:81px;height:20px;background:#f0f0f0"></div>
<svg class="a" style="left:78px;top:443px" width="17" height="12" viewBox="0 0 17 12"><path d="M0.5 6C3 1.8 5.5 0.5 8.5 0.5S14 1.8 16.5 6C14 10.2 11.5 11.5 8.5 11.5S3 10.2 0.5 6z" fill="#8c8c8c"/><circle cx="8.5" cy="6" r="3.3" fill="#f0f0f0"/><circle cx="8.5" cy="6" r="1.9" fill="#8c8c8c"/></svg>
<svg class="a" style="left:103px;top:441px" width="17" height="17" viewBox="0 0 17 17"><rect x="6.5" y="1.5" width="9.5" height="10" fill="none" stroke="#777" stroke-width="1"/><rect x="2" y="6" width="10.5" height="10.5" fill="#e59158"/><rect x="2" y="6" width="4.5" height="6.5" fill="#f2b48a" opacity="0.6"/><path d="M6.5 6v5.5h6" fill="none" stroke="#b86a3a" stroke-width="0.8"/></svg>
<div class="a tx" style="left:133px;top:442px">YZ</div>
<div class="a" style="left:57px;top:463px;width:103px;height:20px;background:#f0f0f0"></div>
<svg class="a" style="left:39px;top:469px" width="8" height="8" viewBox="0 0 8 8"><path d="M0.5 7.5L7.5 0.5V7.5z" fill="#2a2a2a"/></svg>
<svg class="a" style="left:60px;top:467px" width="17" height="12" viewBox="0 0 17 12"><path d="M0.5 6C3 1.8 5.5 0.5 8.5 0.5S14 1.8 16.5 6C14 10.2 11.5 11.5 8.5 11.5S3 10.2 0.5 6z" fill="#8c8c8c"/><circle cx="8.5" cy="6" r="3.3" fill="#f0f0f0"/><circle cx="8.5" cy="6" r="1.9" fill="#8c8c8c"/></svg>
<svg class="a" style="left:85px;top:466px" width="17" height="13" viewBox="0 0 17 13"><path d="M0 0.3H6.5L7.3 1.3H0Z" fill="#8f8f8f"/><path d="M0 2.6H7.2L8.6 1.1H16V13H0Z" fill="#8f8f8f"/></svg>
<div class="a tx" style="left:115px;top:466px">Bodies</div>
<div class="a" style="left:75px;top:487px;width:100px;height:20px;background:#f0f0f0"></div>
<svg class="a" style="left:78px;top:491px" width="17" height="12" viewBox="0 0 17 12"><path d="M0.5 6C3 1.8 5.5 0.5 8.5 0.5S14 1.8 16.5 6C14 10.2 11.5 11.5 8.5 11.5S3 10.2 0.5 6z" fill="#8c8c8c"/><circle cx="8.5" cy="6" r="3.3" fill="#f0f0f0"/><circle cx="8.5" cy="6" r="1.9" fill="#8c8c8c"/></svg>
<svg class="a" style="left:103px;top:489px" width="17" height="17" viewBox="0 0 17 17"><defs><linearGradient id="bdg" x1="0" y1="0" x2="1" y2="1"><stop offset="0" stop-color="#ffffff"/><stop offset="1" stop-color="#c9cdd4"/></linearGradient></defs><path d="M1 4.5Q1 1 8.5 1T16 4.5V12.5Q16 16 8.5 16T1 12.5Z" fill="url(#bdg)" stroke="#6e6e6e" stroke-width="0.9"/><path d="M3 5.5Q8.5 4 14 5.5" fill="none" stroke="#e8e8e8" stroke-width="0.8"/></svg>
<div class="a tx" style="left:133px;top:490px">Body2</div>
<div class="a" style="left:57px;top:511px;width:135px;height:20px;background:#f0f0f0"></div>
<svg class="a" style="left:39px;top:517px" width="8" height="8" viewBox="0 0 8 8"><path d="M0.5 7.5L7.5 0.5V7.5z" fill="#2a2a2a"/></svg>
<svg class="a" style="left:60px;top:515px" width="17" height="12" viewBox="0 0 17 12"><path d="M0.5 6C3 1.8 5.5 0.5 8.5 0.5S14 1.8 16.5 6C14 10.2 11.5 11.5 8.5 11.5S3 10.2 0.5 6z" fill="#8c8c8c"/><circle cx="8.5" cy="6" r="3.3" fill="#f0f0f0"/><circle cx="8.5" cy="6" r="1.9" fill="#8c8c8c"/></svg>
<svg class="a" style="left:85px;top:513px" width="17" height="17" viewBox="0 0 17 17"><defs><linearGradient id="cmpg" x1="0" y1="0" x2="0" y2="1"><stop offset="0" stop-color="#eef0f4"/><stop offset="1" stop-color="#b9bfca"/></linearGradient></defs><path d="M1.5 4.5l3-3.5h10.5l-3 3.5z" fill="#f4f5f8" stroke="#7d8088" stroke-width="0.8"/><path d="M12 4.5l3-3.5v10.5l-3 4z" fill="#aeb4be" stroke="#7d8088" stroke-width="0.8"/><rect x="1.5" y="4.5" width="10.5" height="11" rx="0.8" fill="url(#cmpg)" stroke="#7d8088" stroke-width="0.8"/></svg>
<div class="a tx" style="left:115px;top:514px">Level 1 top:1</div>
<div class="a" style="left:75px;top:535px;width:98px;height:20px;background:#f0f0f0"></div>
<svg class="a" style="left:58px;top:540px" width="8" height="11" viewBox="0 0 8 11"><path d="M1 1l6 4.5L1 10z" fill="#fff" stroke="#8a8a8a" stroke-width="1"/></svg>
<svg class="a" style="left:78px;top:538px" width="17" height="14" viewBox="0 0 17 14"><path d="M0.5 7C3 2.8 5.5 1.5 8.5 1.5S14 2.8 16.5 7C14 11.2 11.5 12.5 8.5 12.5S3 11.2 0.5 7z" fill="#dcdcdc"/><path d="M2.5 0.5l12 13" stroke="#f0f0f0" stroke-width="2.4"/><path d="M2.5 0.5l12 13" stroke="#d4d4d4" stroke-width="0.9"/></svg>
<svg class="a" style="left:103px;top:538px" width="17" height="13" viewBox="0 0 17 13"><path d="M0 0.3H6.5L7.3 1.3H0Z" fill="#8f8f8f"/><path d="M0 2.6H7.2L8.6 1.1H16V13H0Z" fill="#8f8f8f"/></svg>
<div class="a tx" style="left:133px;top:538px">Origin</div>
<div class="a" style="left:75px;top:559px;width:115px;height:20px;background:#f0f0f0"></div>
<svg class="a" style="left:58px;top:564px" width="8" height="11" viewBox="0 0 8 11"><path d="M1 1l6 4.5L1 10z" fill="#fff" stroke="#8a8a8a" stroke-width="1"/></svg>
<svg class="a" style="left:78px;top:562px" width="17" height="14" viewBox="0 0 17 14"><path d="M0.5 7C3 2.8 5.5 1.5 8.5 1.5S14 2.8 16.5 7C14 11.2 11.5 12.5 8.5 12.5S3 11.2 0.5 7z" fill="#dcdcdc"/><path d="M2.5 0.5l12 13" stroke="#f0f0f0" stroke-width="2.4"/><path d="M2.5 0.5l12 13" stroke="#d4d4d4" stroke-width="0.9"/></svg>
<svg class="a" style="left:103px;top:562px" width="17" height="13" viewBox="0 0 17 13"><path d="M0 0.3H6.5L7.3 1.3H0Z" fill="#8f8f8f"/><path d="M0 2.6H7.2L8.6 1.1H16V13H0Z" fill="#8f8f8f"/></svg>
<div class="a tx" style="left:133px;top:562px">Sketches</div>
<div class="a" style="left:57px;top:583px;width:135px;height:20px;background:#f0f0f0"></div>
<svg class="a" style="left:39px;top:589px" width="8" height="8" viewBox="0 0 8 8"><path d="M0.5 7.5L7.5 0.5V7.5z" fill="#2a2a2a"/></svg>
<svg class="a" style="left:60px;top:587px" width="17" height="12" viewBox="0 0 17 12"><path d="M0.5 6C3 1.8 5.5 0.5 8.5 0.5S14 1.8 16.5 6C14 10.2 11.5 11.5 8.5 11.5S3 10.2 0.5 6z" fill="#8c8c8c"/><circle cx="8.5" cy="6" r="3.3" fill="#f0f0f0"/><circle cx="8.5" cy="6" r="1.9" fill="#8c8c8c"/></svg>
<svg class="a" style="left:85px;top:585px" width="17" height="17" viewBox="0 0 17 17"><defs><linearGradient id="asmg" x1="0" y1="0" x2="0" y2="1"><stop offset="0" stop-color="#f2f4f8"/><stop offset="1" stop-color="#bfc5cf"/></linearGradient></defs><rect x="1" y="0.8" width="7.5" height="14.5" rx="1.2" fill="url(#asmg)" stroke="#666" stroke-width="0.9"/><rect x="8" y="7.3" width="7" height="8" rx="1.2" fill="url(#asmg)" stroke="#666" stroke-width="0.9"/><path d="M1.5 8h6.5" stroke="#c8ccd4" stroke-width="0.7"/></svg>
<div class="a tx" style="left:115px;top:586px">conector12:1</div>
<div class="a" style="left:75px;top:607px;width:98px;height:20px;background:#f0f0f0"></div>
<svg class="a" style="left:58px;top:612px" width="8" height="11" viewBox="0 0 8 11"><path d="M1 1l6 4.5L1 10z" fill="#fff" stroke="#8a8a8a" stroke-width="1"/></svg>
<svg class="a" style="left:78px;top:610px" width="17" height="14" viewBox="0 0 17 14"><path d="M0.5 7C3 2.8 5.5 1.5 8.5 1.5S14 2.8 16.5 7C14 11.2 11.5 12.5 8.5 12.5S3 11.2 0.5 7z" fill="#dcdcdc"/><path d="M2.5 0.5l12 13" stroke="#f0f0f0" stroke-width="2.4"/><path d="M2.5 0.5l12 13" stroke="#d4d4d4" stroke-width="0.9"/></svg>
<svg class="a" style="left:103px;top:610px" width="17" height="13" viewBox="0 0 17 13"><path d="M0 0.3H6.5L7.3 1.3H0Z" fill="#8f8f8f"/><path d="M0 2.6H7.2L8.6 1.1H16V13H0Z" fill="#8f8f8f"/></svg>
<div class="a tx" style="left:133px;top:610px">Origin</div>
<div class="a" style="left:75px;top:631px;width:138px;height:20px;background:#f0f0f0"></div>
<svg class="a" style="left:57px;top:637px" width="8" height="8" viewBox="0 0 8 8"><path d="M0.5 7.5L7.5 0.5V7.5z" fill="#2a2a2a"/></svg>
<svg class="a" style="left:78px;top:635px" width="17" height="12" viewBox="0 0 17 12"><path d="M0.5 6C3 1.8 5.5 0.5 8.5 0.5S14 1.8 16.5 6C14 10.2 11.5 11.5 8.5 11.5S3 10.2 0.5 6z" fill="#8c8c8c"/><circle cx="8.5" cy="6" r="3.3" fill="#f0f0f0"/><circle cx="8.5" cy="6" r="1.9" fill="#8c8c8c"/></svg>
<svg class="a" style="left:103px;top:633px" width="17" height="17" viewBox="0 0 17 17"><defs><linearGradient id="cmpg" x1="0" y1="0" x2="0" y2="1"><stop offset="0" stop-color="#eef0f4"/><stop offset="1" stop-color="#b9bfca"/></linearGradient></defs><path d="M1.5 4.5l3-3.5h10.5l-3 3.5z" fill="#f4f5f8" stroke="#7d8088" stroke-width="0.8"/><path d="M12 4.5l3-3.5v10.5l-3 4z" fill="#aeb4be" stroke="#7d8088" stroke-width="0.8"/><rect x="1.5" y="4.5" width="10.5" height="11" rx="0.8" fill="url(#cmpg)" stroke="#7d8088" stroke-width="0.8"/></svg>
<div class="a tx" style="left:133px;top:634px">connector 1:1</div>
<div class="a" style="left:93px;top:655px;width:98px;height:20px;background:#f0f0f0"></div>
<svg class="a" style="left:76px;top:660px" width="8" height="11" viewBox="0 0 8 11"><path d="M1 1l6 4.5L1 10z" fill="#fff" stroke="#8a8a8a" stroke-width="1"/></svg>
<svg class="a" style="left:96px;top:658px" width="17" height="14" viewBox="0 0 17 14"><path d="M0.5 7C3 2.8 5.5 1.5 8.5 1.5S14 2.8 16.5 7C14 11.2 11.5 12.5 8.5 12.5S3 11.2 0.5 7z" fill="#dcdcdc"/><path d="M2.5 0.5l12 13" stroke="#f0f0f0" stroke-width="2.4"/><path d="M2.5 0.5l12 13" stroke="#d4d4d4" stroke-width="0.9"/></svg>
<svg class="a" style="left:121px;top:658px" width="17" height="13" viewBox="0 0 17 13"><path d="M0 0.3H6.5L7.3 1.3H0Z" fill="#8f8f8f"/><path d="M0 2.6H7.2L8.6 1.1H16V13H0Z" fill="#8f8f8f"/></svg>
<div class="a tx" style="left:151px;top:658px">Origin</div>
<div class="a" style="left:93px;top:679px;width:103px;height:20px;background:#f0f0f0"></div>
<svg class="a" style="left:76px;top:684px" width="8" height="11" viewBox="0 0 8 11"><path d="M1 1l6 4.5L1 10z" fill="#fff" stroke="#8a8a8a" stroke-width="1"/></svg>
<svg class="a" style="left:96px;top:683px" width="17" height="12" viewBox="0 0 17 12"><path d="M0.5 6C3 1.8 5.5 0.5 8.5 0.5S14 1.8 16.5 6C14 10.2 11.5 11.5 8.5 11.5S3 10.2 0.5 6z" fill="#8c8c8c"/><circle cx="8.5" cy="6" r="3.3" fill="#f0f0f0"/><circle cx="8.5" cy="6" r="1.9" fill="#8c8c8c"/></svg>
<svg class="a" style="left:121px;top:682px" width="17" height="13" viewBox="0 0 17 13"><path d="M0 0.3H6.5L7.3 1.3H0Z" fill="#8f8f8f"/><path d="M0 2.6H7.2L8.6 1.1H16V13H0Z" fill="#8f8f8f"/></svg>
<div class="a tx" style="left:151px;top:682px">Bodies</div>
<div class="a" style="left:93px;top:703px;width:115px;height:20px;background:#f0f0f0"></div>
<svg class="a" style="left:76px;top:708px" width="8" height="11" viewBox="0 0 8 11"><path d="M1 1l6 4.5L1 10z" fill="#fff" stroke="#8a8a8a" stroke-width="1"/></svg>
<svg class="a" style="left:96px;top:706px" width="17" height="14" viewBox="0 0 17 14"><path d="M0.5 7C3 2.8 5.5 1.5 8.5 1.5S14 2.8 16.5 7C14 11.2 11.5 12.5 8.5 12.5S3 11.2 0.5 7z" fill="#dcdcdc"/><path d="M2.5 0.5l12 13" stroke="#f0f0f0" stroke-width="2.4"/><path d="M2.5 0.5l12 13" stroke="#d4d4d4" stroke-width="0.9"/></svg>
<svg class="a" style="left:121px;top:706px" width="17" height="13" viewBox="0 0 17 13"><path d="M0 0.3H6.5L7.3 1.3H0Z" fill="#8f8f8f"/><path d="M0 2.6H7.2L8.6 1.1H16V13H0Z" fill="#8f8f8f"/></svg>
<div class="a tx" style="left:151px;top:706px">Sketches</div>
<div class="a" style="left:3px;top:747px;width:299px;height:24px;background:#f0f0f0;border:1px solid #dadada;border-bottom:2px solid #d6d6d6"></div>
<div class="a" style="left:28px;top:753px;font-size:11px;letter-spacing:-0.35px;color:#333;line-height:13px">COMMENTS</div>
<svg class="a" style="left:281px;top:754px" width="20" height="11" viewBox="0 0 20 11"><circle cx="5" cy="5.5" r="4.3" fill="#111"/><path d="M1 5.5h8M5 1.5v8" stroke="#bbb" stroke-width="1"/><path d="M16 1v9" stroke="#777" stroke-width="1"/><path d="M18 3v5" stroke="#aaa" stroke-width="1"/></svg>
<!-- BROWSER END -->
<!-- BOTTOM START -->
<div class="a" style="left:1438px;top:19px;width:1px;height:807px;background:#8a8a8a"></div><div class="a" style="left:0;top:820px;width:6px;height:6px;background:radial-gradient(circle at 6px 0,transparent 5px,#222 6px)"></div><div class="a" style="left:1433px;top:820px;width:6px;height:6px;background:radial-gradient(circle at 0 0,transparent 5px,#222 6px)"></div>
<div class="a" style="left:0;top:776px;width:1438px;height:50px;background:linear-gradient(#f2f2f2,#ececec);border-top:2px solid #c9c9c9"></div>
<div class="a" style="left:3px;top:777px;width:396px;height:8px;background:#c9c9c9;border-radius:0 4px 4px 4px"></div>
<svg class="a" style="left:8px;top:796px" width="118" height="18" viewBox="0 0 118 18"><g fill="#3c3c3c">
<rect x="2" y="2" width="2" height="14"/><path d="M4 9L14 2.5v13z"/>
<path d="M26 9l10-6.5v13z"/><rect x="37" y="5" width="2" height="8"/>
<path d="M52 1.5l12 7.5-12 7.5z"/>
<rect x="76" y="5" width="2" height="8"/><path d="M79 2.5L89 9 79 15.5z"/>
<path d="M102 2.5L112 9 102 15.5z"/><rect x="112" y="2" width="2" height="14"/>
</g></svg>
<svg class="a" style="left:145px;top:793px" width="17" height="17" viewBox="0 0 17 17"><path d="M1.5 4.5L4.5 1.5H15.5L12.5 4.5Z" fill="#ececec" stroke="#6a6a6a" stroke-width="0.8"/><path d="M12.5 4.5L15.5 1.5V12.5L12.5 15.5Z" fill="#cfcfcf" stroke="#6a6a6a" stroke-width="0.8"/><rect x="1.5" y="4.5" width="11" height="11" fill="#dedede" stroke="#6a6a6a" stroke-width="0.8"/></svg>
<svg class="a" style="left:169px;top:793px" width="17" height="17" viewBox="0 0 17 17"><rect x="1.5" y="1.5" width="13" height="13" fill="none" stroke="#5aa0e0" stroke-width="0.9" stroke-dasharray="1.5 1"/><path d="M4 5v6M5 4h7" stroke="#4a90d9" stroke-width="0.9" stroke-dasharray="1.5 1"/><path d="M12 4c0 4-3 7-8 7" fill="none" stroke="#4a90d9" stroke-width="0.9"/><path d="M8 15l6-6 2 2-6 6z" fill="#f2a52a"/><path d="M13.5 8.5l2 2 1.5-1.5-2-2z" fill="#e53935"/></svg>
<svg class="a" style="left:193px;top:793px" width="17" height="17" viewBox="0 0 17 17"><path d="M1.5 4.5L4.5 1.5H15.5L12.5 4.5Z" fill="#ececec" stroke="#6a6a6a" stroke-width="0.8"/><path d="M12.5 4.5L15.5 1.5V12.5L12.5 15.5Z" fill="#cfcfcf" stroke="#6a6a6a" stroke-width="0.8"/><rect x="1.5" y="4.5" width="11" height="11" fill="#dedede" stroke="#6a6a6a" stroke-width="0.8"/></svg>
<div class="a" style="left:213px;top:789px;width:24px;height:24px;background:#e3e32a;border-radius:2px"></div>
<svg class="a" style="left:217px;top:793px" width="17" height="17" viewBox="0 0 17 17"><rect x="1.5" y="1.5" width="13" height="13" fill="none" stroke="#5aa0e0" stroke-width="0.9" stroke-dasharray="1.5 1"/><path d="M4 5v6M5 4h7" stroke="#4a90d9" stroke-width="0.9" stroke-dasharray="1.5 1"/><path d="M12 4c0 4-3 7-8 7" fill="none" stroke="#4a90d9" stroke-width="0.9"/><path d="M8 15l6-6 2 2-6 6z" fill="#f2a52a"/><path d="M13.5 8.5l2 2 1.5-1.5-2-2z" fill="#e53935"/></svg>
<svg class="a" style="left:241px;top:793px" width="17" height="17" viewBox="0 0 17 17"><path d="M2 13l2 2h10l2-2v-1z" fill="#bdbdbd"/><path d="M2 4l3-3h8l-3 3z" fill="#9fd0f5"/><path d="M10 4l3-3v10l-3 3z" fill="#3d88c8"/><rect x="2" y="4" width="8" height="10" fill="#5aa6e6"/><path d="M15.5 13V1" stroke="#222" stroke-width="0.8"/><circle cx="15.5" cy="1.5" r="1" fill="#222"/></svg>
<svg class="a" style="left:265px;top:793px" width="17" height="17" viewBox="0 0 17 17"><path d="M1.5 4.5L4.5 1.5H15.5L12.5 4.5Z" fill="#ececec" stroke="#6a6a6a" stroke-width="0.8"/><path d="M12.5 4.5L15.5 1.5V12.5L12.5 15.5Z" fill="#cfcfcf" stroke="#6a6a6a" stroke-width="0.8"/><rect x="1.5" y="4.5" width="11" height="11" fill="#dedede" stroke="#6a6a6a" stroke-width="0.8"/></svg>
<svg class="a" style="left:289px;top:793px" width="17" height="17" viewBox="0 0 17 17"><path d="M1.5 4.5L4.5 1.5H15.5L12.5 4.5Z" fill="#ececec" stroke="#6a6a6a" stroke-width="0.8"/><path d="M12.5 4.5L15.5 1.5V12.5L12.5 15.5Z" fill="#cfcfcf" stroke="#6a6a6a" stroke-width="0.8"/><rect x="1.5" y="4.5" width="11" height="11" fill="#dedede" stroke="#6a6a6a" stroke-width="0.8"/></svg>
<div class="a" style="left:309px;top:789px;width:24px;height:24px;background:#e3e32a;border-radius:2px"></div>
<svg class="a" style="left:313px;top:793px" width="17" height="17" viewBox="0 0 17 17"><rect x="2" y="1" width="7" height="8" rx="2" fill="#f0f0f0" stroke="#777" stroke-width="0.8"/><rect x="8" y="7" width="7" height="8" rx="2" fill="#f0f0f0" stroke="#777" stroke-width="0.8"/><path d="M4 9v4h3" fill="none" stroke="#e53935" stroke-width="0.9"/></svg>
<svg class="a" style="left:337px;top:793px" width="17" height="17" viewBox="0 0 17 17"><path d="M1.5 2.5L3 1H8.5V7.5L7 9H1.5Z" fill="#f0f2f5" stroke="#999" stroke-width="0.7"/><path d="M7 10L9 8H15.5V14L13.5 16H7Z" fill="#d9dde3" stroke="#8a8f96" stroke-width="0.7"/><path d="M3 9.5v3h3" fill="none" stroke="#e53935" stroke-width="0.9"/><path d="M6 11l2 1.5-2 1.5z" fill="#e53935"/></svg>
<svg class="a" style="left:361px;top:793px" width="17" height="17" viewBox="0 0 17 17"><path d="M1.5 3L3 1H8.5V6.5L7 8H1.5Z" fill="#dcdcdc" stroke="#555" stroke-width="0.8"/><path d="M9 10L10.5 8H16V13.5L14.5 15.5H9Z" fill="#dcdcdc" stroke="#555" stroke-width="0.8"/><path d="M2.5 10.5v2.5h3" fill="none" stroke="#222" stroke-width="0.9"/><path d="M5.5 11.3l2.2 1.7-2.2 1.7z" fill="#222"/></svg>
<svg class="a" style="left:385px;top:793px" width="17" height="17" viewBox="0 0 17 17"><path d="M1.5 3L3 1H8.5V6.5L7 8H1.5Z" fill="#dcdcdc" stroke="#555" stroke-width="0.8"/><path d="M9 10L10.5 8H16V13.5L14.5 15.5H9Z" fill="#dcdcdc" stroke="#555" stroke-width="0.8"/><path d="M2.5 10.5v2.5h3" fill="none" stroke="#222" stroke-width="0.9"/><path d="M5.5 11.3l2.2 1.7-2.2 1.7z" fill="#222"/></svg>
<svg class="a" style="left:409px;top:793px" width="17" height="17" viewBox="0 0 17 17"><path d="M1.5 3L3 1H8.5V6.5L7 8H1.5Z" fill="#dcdcdc" stroke="#555" stroke-width="0.8"/><path d="M9 10L10.5 8H16V13.5L14.5 15.5H9Z" fill="#dcdcdc" stroke="#555" stroke-width="0.8"/><path d="M2.5 10.5v2.5h3" fill="none" stroke="#222" stroke-width="0.9"/><path d="M5.5 11.3l2.2 1.7-2.2 1.7z" fill="#222"/></svg>
<svg class="a" style="left:433px;top:793px" width="17" height="17" viewBox="0 0 17 17"><path d="M1.5 3L3 1H8.5V6.5L7 8H1.5Z" fill="#dcdcdc" stroke="#555" stroke-width="0.8"/><path d="M9 10L10.5 8H16V13.5L14.5 15.5H9Z" fill="#dcdcdc" stroke="#555" stroke-width="0.8"/><path d="M2.5 10.5v2.5h3" fill="none" stroke="#222" stroke-width="0.9"/><path d="M5.5 11.3l2.2 1.7-2.2 1.7z" fill="#222"/></svg>
<svg class="a" style="left:457px;top:793px" width="17" height="17" viewBox="0 0 17 17"><path d="M1.5 3L3 1H8.5V6.5L7 8H1.5Z" fill="#dcdcdc" stroke="#555" stroke-width="0.8"/><path d="M9 10L10.5 8H16V13.5L14.5 15.5H9Z" fill="#dcdcdc" stroke="#555" stroke-width="0.8"/><path d="M2.5 10.5v2.5h3" fill="none" stroke="#222" stroke-width="0.9"/><path d="M5.5 11.3l2.2 1.7-2.2 1.7z" fill="#222"/></svg>
<svg class="a" style="left:481px;top:793px" width="17" height="17" viewBox="0 0 17 17"><path d="M1.5 3L3 1H8.5V6.5L7 8H1.5Z" fill="#dcdcdc" stroke="#555" stroke-width="0.8"/><path d="M9 10L10.5 8H16V13.5L14.5 15.5H9Z" fill="#dcdcdc" stroke="#555" stroke-width="0.8"/><path d="M2.5 10.5v2.5h3" fill="none" stroke="#222" stroke-width="0.9"/><path d="M5.5 11.3l2.2 1.7-2.2 1.7z" fill="#222"/></svg>
<svg class="a" style="left:505px;top:793px" width="17" height="17" viewBox="0 0 17 17"><path d="M1.5 3L3 1H8.5V6.5L7 8H1.5Z" fill="#dcdcdc" stroke="#555" stroke-width="0.8"/><path d="M9 10L10.5 8H16V13.5L14.5 15.5H9Z" fill="#dcdcdc" stroke="#555" stroke-width="0.8"/><path d="M2.5 10.5v2.5h3" fill="none" stroke="#222" stroke-width="0.9"/><path d="M5.5 11.3l2.2 1.7-2.2 1.7z" fill="#222"/></svg>
<svg class="a" style="left:529px;top:793px" width="17" height="17" viewBox="0 0 17 17"><path d="M1.5 3L3 1H8.5V6.5L7 8H1.5Z" fill="#dcdcdc" stroke="#555" stroke-width="0.8"/><path d="M9 10L10.5 8H16V13.5L14.5 15.5H9Z" fill="#dcdcdc" stroke="#555" stroke-width="0.8"/><path d="M2.5 10.5v2.5h3" fill="none" stroke="#222" stroke-width="0.9"/><path d="M5.5 11.3l2.2 1.7-2.2 1.7z" fill="#222"/></svg>
<svg class="a" style="left:553px;top:793px" width="17" height="17" viewBox="0 0 17 17"><path d="M1.5 3L3 1H8.5V6.5L7 8H1.5Z" fill="#dcdcdc" stroke="#555" stroke-width="0.8"/><path d="M9 10L10.5 8H16V13.5L14.5 15.5H9Z" fill="#dcdcdc" stroke="#555" stroke-width="0.8"/><path d="M2.5 10.5v2.5h3" fill="none" stroke="#222" stroke-width="0.9"/><path d="M5.5 11.3l2.2 1.7-2.2 1.7z" fill="#222"/></svg>
<svg class="a" style="left:577px;top:793px" width="17" height="17" viewBox="0 0 17 17"><path d="M1.5 3L3 1H8.5V6.5L7 8H1.5Z" fill="#dcdcdc" stroke="#555" stroke-width="0.8"/><path d="M9 10L10.5 8H16V13.5L14.5 15.5H9Z" fill="#dcdcdc" stroke="#555" stroke-width="0.8"/><path d="M2.5 10.5v2.5h3" fill="none" stroke="#222" stroke-width="0.9"/><path d="M5.5 11.3l2.2 1.7-2.2 1.7z" fill="#222"/></svg>
<svg class="a" style="left:601px;top:793px" width="17" height="17" viewBox="0 0 17 17"><path d="M1.5 3L3 1H8.5V6.5L7 8H1.5Z" fill="#dcdcdc" stroke="#555" stroke-width="0.8"/><path d="M9 10L10.5 8H16V13.5L14.5 15.5H9Z" fill="#dcdcdc" stroke="#555" stroke-width="0.8"/><path d="M2.5 10.5v2.5h3" fill="none" stroke="#222" stroke-width="0.9"/><path d="M5.5 11.3l2.2 1.7-2.2 1.7z" fill="#222"/></svg>
<svg class="a" style="left:625px;top:793px" width="17" height="17" viewBox="0 0 17 17"><path d="M1.5 4.5L4.5 1.5H15.5L12.5 4.5Z" fill="#ececec" stroke="#6a6a6a" stroke-width="0.8"/><path d="M12.5 4.5L15.5 1.5V12.5L12.5 15.5Z" fill="#cfcfcf" stroke="#6a6a6a" stroke-width="0.8"/><rect x="1.5" y="4.5" width="11" height="11" fill="#dedede" stroke="#6a6a6a" stroke-width="0.8"/></svg>
<svg class="a" style="left:649px;top:793px" width="17" height="17" viewBox="0 0 17 17"><rect x="2" y="2" width="6" height="13" fill="#fafafa" stroke="#888" stroke-width="0.8"/><rect x="7" y="1" width="8" height="7" fill="#5aa6e6"/></svg>
<svg class="a" style="left:673px;top:793px" width="17" height="17" viewBox="0 0 17 17"><path d="M2 5l3-3v12l-3 2z" fill="#dedede" stroke="#777" stroke-width="0.7"/><path d="M5 4l3-3v12l-3 3z" fill="#5cb870"/><path d="M10 6l5-5v11l-5 4z" fill="#e69a5d"/></svg>
<svg class="a" style="left:697px;top:793px" width="17" height="17" viewBox="0 0 17 17"><rect x="1.5" y="1.5" width="13" height="13" fill="none" stroke="#5aa0e0" stroke-width="0.9" stroke-dasharray="1.5 1"/><path d="M4 5v6M5 4h7" stroke="#4a90d9" stroke-width="0.9" stroke-dasharray="1.5 1"/><path d="M12 4c0 4-3 7-8 7" fill="none" stroke="#4a90d9" stroke-width="0.9"/><path d="M8 15l6-6 2 2-6 6z" fill="#f2a52a"/><path d="M13.5 8.5l2 2 1.5-1.5-2-2z" fill="#e53935"/></svg>
<svg class="a" style="left:721px;top:793px" width="17" height="17" viewBox="0 0 17 17"><path d="M2 13l2 2h10l2-2v-1z" fill="#bdbdbd"/><path d="M2 4l3-3h8l-3 3z" fill="#9fd0f5"/><path d="M10 4l3-3v10l-3 3z" fill="#3d88c8"/><rect x="2" y="4" width="8" height="10" fill="#5aa6e6"/><path d="M15.5 13V1" stroke="#222" stroke-width="0.8"/><circle cx="15.5" cy="1.5" r="1" fill="#222"/></svg>
<svg class="a" style="left:745px;top:793px" width="17" height="17" viewBox="0 0 17 17"><path d="M1.5 4.5L4.5 1.5H15.5L12.5 4.5Z" fill="#ececec" stroke="#6a6a6a" stroke-width="0.8"/><path d="M12.5 4.5L15.5 1.5V12.5L12.5 15.5Z" fill="#cfcfcf" stroke="#6a6a6a" stroke-width="0.8"/><rect x="1.5" y="4.5" width="11" height="11" fill="#dedede" stroke="#6a6a6a" stroke-width="0.8"/></svg>
<svg class="a" style="left:769px;top:793px" width="17" height="17" viewBox="0 0 17 17"><rect x="1.5" y="1.5" width="13" height="13" fill="none" stroke="#5aa0e0" stroke-width="0.9" stroke-dasharray="1.5 1"/><path d="M4 5v6M5 4h7" stroke="#4a90d9" stroke-width="0.9" stroke-dasharray="1.5 1"/><path d="M12 4c0 4-3 7-8 7" fill="none" stroke="#4a90d9" stroke-width="0.9"/><path d="M8 15l6-6 2 2-6 6z" fill="#f2a52a"/><path d="M13.5 8.5l2 2 1.5-1.5-2-2z" fill="#e53935"/></svg>
<svg class="a" style="left:793px;top:793px" width="17" height="17" viewBox="0 0 17 17"><path d="M1.5 2.5L3 1H8.5V7.5L7 9H1.5Z" fill="#f0f2f5" stroke="#999" stroke-width="0.7"/><path d="M7 10L9 8H15.5V14L13.5 16H7Z" fill="#d9dde3" stroke="#8a8f96" stroke-width="0.7"/><path d="M3 9.5v3h3" fill="none" stroke="#e53935" stroke-width="0.9"/><path d="M6 11l2 1.5-2 1.5z" fill="#e53935"/></svg>
<svg class="a" style="left:817px;top:793px" width="17" height="17" viewBox="0 0 17 17"><path d="M2 13l2 2h10l2-2v-1z" fill="#bdbdbd"/><path d="M2 4l3-3h8l-3 3z" fill="#9fd0f5"/><path d="M10 4l3-3v10l-3 3z" fill="#3d88c8"/><rect x="2" y="4" width="8" height="10" fill="#5aa6e6"/><path d="M15.5 13V1" stroke="#222" stroke-width="0.8"/><circle cx="15.5" cy="1.5" r="1" fill="#222"/></svg>
<svg class="a" style="left:841px;top:793px" width="17" height="17" viewBox="0 0 17 17"><path d="M1.5 4.5L4.5 1.5H15.5L12.5 4.5Z" fill="#ececec" stroke="#6a6a6a" stroke-width="0.8"/><path d="M12.5 4.5L15.5 1.5V12.5L12.5 15.5Z" fill="#cfcfcf" stroke="#6a6a6a" stroke-width="0.8"/><rect x="1.5" y="4.5" width="11" height="11" fill="#dedede" stroke="#6a6a6a" stroke-width="0.8"/></svg>
<svg class="a" style="left:865px;top:793px" width="17" height="17" viewBox="0 0 17 17"><rect x="1.5" y="1.5" width="13" height="13" fill="none" stroke="#5aa0e0" stroke-width="0.9" stroke-dasharray="1.5 1"/><path d="M4 5v6M5 4h7" stroke="#4a90d9" stroke-width="0.9" stroke-dasharray="1.5 1"/><path d="M12 4c0 4-3 7-8 7" fill="none" stroke="#4a90d9" stroke-width="0.9"/><path d="M8 15l6-6 2 2-6 6z" fill="#f2a52a"/><path d="M13.5 8.5l2 2 1.5-1.5-2-2z" fill="#e53935"/></svg>
<svg class="a" style="left:889px;top:793px" width="17" height="17" viewBox="0 0 17 17"><path d="M2 13l2 2h10l2-2v-1z" fill="#bdbdbd"/><path d="M2 4l3-3h8l-3 3z" fill="#9fd0f5"/><path d="M10 4l3-3v10l-3 3z" fill="#3d88c8"/><rect x="2" y="4" width="8" height="10" fill="#5aa6e6"/><path d="M15.5 13V1" stroke="#222" stroke-width="0.8"/><circle cx="15.5" cy="1.5" r="1" fill="#222"/></svg>
<svg class="a" style="left:913px;top:793px" width="17" height="17" viewBox="0 0 17 17"><path d="M1.5 3L3 1H8.5V6.5L7 8H1.5Z" fill="#dcdcdc" stroke="#555" stroke-width="0.8"/><path d="M9 10L10.5 8H16V13.5L14.5 15.5H9Z" fill="#dcdcdc" stroke="#555" stroke-width="0.8"/><path d="M2.5 10.5v2.5h3" fill="none" stroke="#222" stroke-width="0.9"/><path d="M5.5 11.3l2.2 1.7-2.2 1.7z" fill="#222"/></svg>
<svg class="a" style="left:937px;top:793px" width="17" height="17" viewBox="0 0 17 17"><path d="M1.5 4.5L4.5 1.5H15.5L12.5 4.5Z" fill="#ececec" stroke="#6a6a6a" stroke-width="0.8"/><path d="M12.5 4.5L15.5 1.5V12.5L12.5 15.5Z" fill="#cfcfcf" stroke="#6a6a6a" stroke-width="0.8"/><rect x="1.5" y="4.5" width="11" height="11" fill="#dedede" stroke="#6a6a6a" stroke-width="0.8"/></svg>
<svg class="a" style="left:961px;top:793px" width="17" height="17" viewBox="0 0 17 17"><rect x="1.5" y="1.5" width="13" height="13" fill="none" stroke="#5aa0e0" stroke-width="0.9" stroke-dasharray="1.5 1"/><path d="M4 5v6M5 4h7" stroke="#4a90d9" stroke-width="0.9" stroke-dasharray="1.5 1"/><path d="M12 4c0 4-3 7-8 7" fill="none" stroke="#4a90d9" stroke-width="0.9"/><path d="M8 15l6-6 2 2-6 6z" fill="#f2a52a"/><path d="M13.5 8.5l2 2 1.5-1.5-2-2z" fill="#e53935"/></svg>
<svg class="a" style="left:985px;top:793px" width="17" height="17" viewBox="0 0 17 17"><path d="M2 13l2 2h10l2-2v-1z" fill="#bdbdbd"/><path d="M2 4l3-3h8l-3 3z" fill="#9fd0f5"/><path d="M10 4l3-3v10l-3 3z" fill="#3d88c8"/><rect x="2" y="4" width="8" height="10" fill="#5aa6e6"/><path d="M15.5 13V1" stroke="#222" stroke-width="0.8"/><circle cx="15.5" cy="1.5" r="1" fill="#222"/></svg>
<svg class="a" style="left:1009px;top:793px" width="17" height="17" viewBox="0 0 17 17"><path d="M1.5 4.5L4.5 1.5H15.5L12.5 4.5Z" fill="#ececec" stroke="#6a6a6a" stroke-width="0.8"/><path d="M12.5 4.5L15.5 1.5V12.5L12.5 15.5Z" fill="#cfcfcf" stroke="#6a6a6a" stroke-width="0.8"/><rect x="1.5" y="4.5" width="11" height="11" fill="#dedede" stroke="#6a6a6a" stroke-width="0.8"/></svg>
<svg class="a" style="left:1033px;top:793px" width="17" height="17" viewBox="0 0 17 17"><rect x="1.5" y="1.5" width="13" height="13" fill="none" stroke="#5aa0e0" stroke-width="0.9" stroke-dasharray="1.5 1"/><path d="M4 5v6M5 4h7" stroke="#4a90d9" stroke-width="0.9" stroke-dasharray="1.5 1"/><path d="M12 4c0 4-3 7-8 7" fill="none" stroke="#4a90d9" stroke-width="0.9"/><path d="M8 15l6-6 2 2-6 6z" fill="#f2a52a"/><path d="M13.5 8.5l2 2 1.5-1.5-2-2z" fill="#e53935"/></svg>
<svg class="a" style="left:1057px;top:793px" width="17" height="17" viewBox="0 0 17 17"><path d="M2 13l2 2h10l2-2v-1z" fill="#bdbdbd"/><path d="M2 4l3-3h8l-3 3z" fill="#9fd0f5"/><path d="M10 4l3-3v10l-3 3z" fill="#3d88c8"/><rect x="2" y="4" width="8" height="10" fill="#5aa6e6"/><path d="M15.5 13V1" stroke="#222" stroke-width="0.8"/><circle cx="15.5" cy="1.5" r="1" fill="#222"/></svg>
<svg class="a" style="left:1081px;top:793px" width="17" height="17" viewBox="0 0 17 17"><path d="M2 13l2 2h10l2-2v-1z" fill="#bdbdbd"/><path d="M2 4l3-3h8l-3 3z" fill="#9fd0f5"/><path d="M10 4l3-3v10l-3 3z" fill="#3d88c8"/><rect x="2" y="4" width="8" height="10" fill="#5aa6e6"/><path d="M15.5 13V1" stroke="#222" stroke-width="0.8"/><circle cx="15.5" cy="1.5" r="1" fill="#222"/></svg>
<svg class="a" style="left:1105px;top:793px" width="17" height="17" viewBox="0 0 17 17"><path d="M1.5 4.5L4.5 1.5H15.5L12.5 4.5Z" fill="#ececec" stroke="#6a6a6a" stroke-width="0.8"/><path d="M12.5 4.5L15.5 1.5V12.5L12.5 15.5Z" fill="#cfcfcf" stroke="#6a6a6a" stroke-width="0.8"/><rect x="1.5" y="4.5" width="11" height="11" fill="#dedede" stroke="#6a6a6a" stroke-width="0.8"/></svg>
<svg class="a" style="left:1129px;top:793px" width="17" height="17" viewBox="0 0 17 17"><rect x="1.5" y="1.5" width="13" height="13" fill="none" stroke="#5aa0e0" stroke-width="0.9" stroke-dasharray="1.5 1"/><path d="M4 5v6M5 4h7" stroke="#4a90d9" stroke-width="0.9" stroke-dasharray="1.5 1"/><path d="M12 4c0 4-3 7-8 7" fill="none" stroke="#4a90d9" stroke-width="0.9"/><path d="M8 15l6-6 2 2-6 6z" fill="#f2a52a"/><path d="M13.5 8.5l2 2 1.5-1.5-2-2z" fill="#e53935"/></svg>
<svg class="a" style="left:1153px;top:793px" width="17" height="17" viewBox="0 0 17 17"><path d="M2 13l2 2h10l2-2v-1z" fill="#bdbdbd"/><path d="M2 4l3-3h8l-3 3z" fill="#9fd0f5"/><path d="M10 4l3-3v10l-3 3z" fill="#3d88c8"/><rect x="2" y="4" width="8" height="10" fill="#5aa6e6"/><path d="M15.5 13V1" stroke="#222" stroke-width="0.8"/><circle cx="15.5" cy="1.5" r="1" fill="#222"/></svg>
<svg class="a" style="left:1177px;top:793px" width="17" height="17" viewBox="0 0 17 17"><path d="M1.5 4.5L4.5 1.5H15.5L12.5 4.5Z" fill="#ececec" stroke="#6a6a6a" stroke-width="0.8"/><path d="M12.5 4.5L15.5 1.5V12.5L12.5 15.5Z" fill="#cfcfcf" stroke="#6a6a6a" stroke-width="0.8"/><rect x="1.5" y="4.5" width="11" height="11" fill="#dedede" stroke="#6a6a6a" stroke-width="0.8"/></svg>
<svg class="a" style="left:1201px;top:793px" width="17" height="17" viewBox="0 0 17 17"><rect x="1.5" y="1.5" width="13" height="13" fill="none" stroke="#5aa0e0" stroke-width="0.9" stroke-dasharray="1.5 1"/><path d="M4 5v6M5 4h7" stroke="#4a90d9" stroke-width="0.9" stroke-dasharray="1.5 1"/><path d="M12 4c0 4-3 7-8 7" fill="none" stroke="#4a90d9" stroke-width="0.9"/><path d="M8 15l6-6 2 2-6 6z" fill="#f2a52a"/><path d="M13.5 8.5l2 2 1.5-1.5-2-2z" fill="#e53935"/></svg>
<svg class="a" style="left:1225px;top:793px" width="17" height="17" viewBox="0 0 17 17"><path d="M2 13l2 2h10l2-2v-1z" fill="#bdbdbd"/><path d="M2 4l3-3h8l-3 3z" fill="#9fd0f5"/><path d="M10 4l3-3v10l-3 3z" fill="#3d88c8"/><rect x="2" y="4" width="8" height="10" fill="#5aa6e6"/><path d="M15.5 13V1" stroke="#222" stroke-width="0.8"/><circle cx="15.5" cy="1.5" r="1" fill="#222"/></svg>
<svg class="a" style="left:1249px;top:793px" width="17" height="17" viewBox="0 0 17 17"><path d="M1.5 4.5L4.5 1.5H15.5L12.5 4.5Z" fill="#ececec" stroke="#6a6a6a" stroke-width="0.8"/><path d="M12.5 4.5L15.5 1.5V12.5L12.5 15.5Z" fill="#cfcfcf" stroke="#6a6a6a" stroke-width="0.8"/><rect x="1.5" y="4.5" width="11" height="11" fill="#dedede" stroke="#6a6a6a" stroke-width="0.8"/></svg>
<svg class="a" style="left:1273px;top:793px" width="17" height="17" viewBox="0 0 17 17"><rect x="1.5" y="1.5" width="13" height="13" fill="none" stroke="#5aa0e0" stroke-width="0.9" stroke-dasharray="1.5 1"/><path d="M4 5v6M5 4h7" stroke="#4a90d9" stroke-width="0.9" stroke-dasharray="1.5 1"/><path d="M12 4c0 4-3 7-8 7" fill="none" stroke="#4a90d9" stroke-width="0.9"/><path d="M8 15l6-6 2 2-6 6z" fill="#f2a52a"/><path d="M13.5 8.5l2 2 1.5-1.5-2-2z" fill="#e53935"/></svg>
<svg class="a" style="left:1297px;top:793px" width="17" height="17" viewBox="0 0 17 17"><path d="M2 13l2 2h10l2-2v-1z" fill="#bdbdbd"/><path d="M2 4l3-3h8l-3 3z" fill="#9fd0f5"/><path d="M10 4l3-3v10l-3 3z" fill="#3d88c8"/><rect x="2" y="4" width="8" height="10" fill="#5aa6e6"/><path d="M15.5 13V1" stroke="#222" stroke-width="0.8"/><circle cx="15.5" cy="1.5" r="1" fill="#222"/></svg>
<svg class="a" style="left:1321px;top:793px" width="17" height="17" viewBox="0 0 17 17"><path d="M1.5 3L3 1H8.5V6.5L7 8H1.5Z" fill="#dcdcdc" stroke="#555" stroke-width="0.8"/><path d="M9 10L10.5 8H16V13.5L14.5 15.5H9Z" fill="#dcdcdc" stroke="#555" stroke-width="0.8"/><path d="M2.5 10.5v2.5h3" fill="none" stroke="#222" stroke-width="0.9"/><path d="M5.5 11.3l2.2 1.7-2.2 1.7z" fill="#222"/></svg>
<svg class="a" style="left:1345px;top:793px" width="17" height="17" viewBox="0 0 17 17"><path d="M1.5 3L3 1H8.5V6.5L7 8H1.5Z" fill="#dcdcdc" stroke="#555" stroke-width="0.8"/><path d="M9 10L10.5 8H16V13.5L14.5 15.5H9Z" fill="#dcdcdc" stroke="#555" stroke-width="0.8"/><path d="M2.5 10.5v2.5h3" fill="none" stroke="#222" stroke-width="0.9"/><path d="M5.5 11.3l2.2 1.7-2.2 1.7z" fill="#222"/></svg>
<svg class="a" style="left:1369px;top:793px" width="17" height="17" viewBox="0 0 17 17"><path d="M1.5 3L3 1H8.5V6.5L7 8H1.5Z" fill="#dcdcdc" stroke="#555" stroke-width="0.8"/><path d="M9 10L10.5 8H16V13.5L14.5 15.5H9Z" fill="#dcdcdc" stroke="#555" stroke-width="0.8"/><path d="M2.5 10.5v2.5h3" fill="none" stroke="#222" stroke-width="0.9"/><path d="M5.5 11.3l2.2 1.7-2.2 1.7z" fill="#222"/></svg>
<svg class="a" style="left:0;top:776px" width="1439" height="50" viewBox="0 776 1439 50"><path d="M153.5 812v5M177.5 812v5M201.5 812v5M225.5 812v5M249.5 812v5M273.5 812v5M297.5 812v5M321.5 812v5M345.5 812v5M369.5 812v5M393.5 812v5M417.5 812v5M441.5 812v5M465.5 812v5M489.5 812v5M513.5 812v5M537.5 812v5M561.5 812v5M585.5 812v5M609.5 812v5M633.5 812v5M657.5 812v5M681.5 812v5M705.5 812v5M729.5 812v5M753.5 812v5M777.5 812v5M801.5 812v5M825.5 812v5M849.5 812v5M873.5 812v5M897.5 812v5M921.5 812v5M945.5 812v5M969.5 812v5M993.5 812v5M1017.5 812v5M1041.5 812v5M1065.5 812v5M1089.5 812v5M1113.5 812v5M1137.5 812v5M1161.5 812v5M1185.5 812v5M1209.5 812v5M1233.5 812v5M1257.5 812v5M1281.5 812v5M1305.5 812v5M1329.5 812v5M1353.5 812v5M1377.5 812v5M153 817.5H1385" stroke="#c6c6c6" stroke-width="1.8" fill="none"/><path d="M1385 817.5h12" stroke="#c6c6c6" stroke-width="1.8" stroke-dasharray="3 2"/></svg>
<svg class="a" style="left:1408px;top:796px" width="18" height="18" viewBox="0 0 18 18"><g stroke="#8c8c8c" stroke-width="3.2"><path d="M9 1v16M1 9h16M3.3 3.3l11.4 11.4M14.7 3.3L3.3 14.7"/></g><circle cx="9" cy="9" r="5.6" fill="#8c8c8c"/><circle cx="9" cy="9" r="2.4" fill="#efefef"/></svg>
<div class="a" style="left:592px;top:748px;width:253px;height:24px;background:#f0f0f0"></div>
<svg class="a" style="left:0;top:740px" width="1439" height="40" viewBox="0 740 1439 40">
<path d="M604 752l3.2 3.5h-2v10.5l-1.2 1.5-1.2-1.5v-10.5h-2z" fill="#fafafa" stroke="#777" stroke-width="0.9"/>
<path d="M600.5 757.5c-3 0.8-4.5 1.8-4.5 2.8 0 1.8 3.6 3.2 8 3.2s8-1.4 8-3.2c0-1-1.5-2-4.5-2.8" fill="none" stroke="#444" stroke-width="1"/><path d="M597.5 762.5l2.5-0.5-0.5 2.5z" fill="#222"/>
<path d="M616 757h9l-4.5 6z" fill="#222"/>
<path d="M630 754l3-2.5v1.5l3-1.5v1.5l3-1.5 1 2.5" fill="none" stroke="#888" stroke-width="0.9"/>
<rect x="629.5" y="755" width="13.5" height="11" rx="0.8" fill="#e8e8e8" stroke="#888" stroke-width="0.9"/><rect x="631.5" y="757.5" width="9.5" height="6" fill="#9aa3b0"/><path d="M631.5 760.5h9.5" stroke="#c8ccd4" stroke-width="0.6"/>
<path d="M657.5 767c-1.5-1.5-3.5-4-4-5.5-0.4-1.2 0.8-1.8 1.8-0.8l1.5 1.5v-8.7c0-1.2 1.8-1.2 1.8 0v5-6.3c0-1.2 1.8-1.2 1.8 0v6.3-5.6c0-1.2 1.8-1.2 1.8 0v5.6-4.6c0-1.2 1.8-1.2 1.8 0v8c0 2.5-1 4.5-2 5.4z" fill="#fff" stroke="#777" stroke-width="0.9"/>
<circle cx="686.5" cy="758" r="5" fill="#e4f0f2" stroke="#666" stroke-width="1.1"/><path d="M690.3 761.8l4.5 4.5" stroke="#222" stroke-width="2"/><path d="M694 752v3.5M692.3 753.7h3.5M692.5 756.5h3" stroke="#777" stroke-width="0.8"/>
<rect x="706.5" y="751.5" width="15" height="16" fill="none" stroke="#999" stroke-width="0.8" stroke-dasharray="1.5 1.2"/>
<circle cx="713" cy="758" r="5" fill="#e8f2f8" stroke="#555" stroke-width="1.2"/><path d="M717 762l5 5" stroke="#333" stroke-width="2.2"/>
<path d="M727 757h9l-4.5 6z" fill="#222"/>
<rect x="747.5" y="751.8" width="15" height="12.5" rx="1" fill="#d4d4d4" stroke="#a0a0a0" stroke-width="0.8"/><rect x="749" y="753.2" width="12" height="9.2" fill="#90b8e6"/><path d="M752 767h6" stroke="#999" stroke-width="1.4"/><path d="M754.5 764.3v2" stroke="#aaa" stroke-width="1.2"/>
<path d="M766 757h9l-4.5 6z" fill="#222"/>
<rect x="778.3" y="752" width="14.7" height="15" rx="0.8" fill="#f6f6f6" stroke="#999" stroke-width="0.7"/>
<path d="M780.5 752v15M782.5 752v15M784.5 752v15M786.5 752v15M788.5 752v15M790.5 752v15M778.3 754.5h14.7M778.3 756.5h14.7M778.3 758.5h14.7M778.3 760.5h14.7M778.3 762.5h14.7M778.3 764.5h14.7" stroke="#9a9a9a" stroke-width="0.6"/>
<path d="M797 757h9l-4.5 6z" fill="#222"/>
<rect x="809.3" y="753.3" width="14.7" height="12.5" fill="#92b6e2" stroke="#7c8fa8" stroke-width="0.8"/><path d="M816.6 753.3v12.5M809.3 759.5h14.7" stroke="#7c8fa8" stroke-width="0.9"/>
<path d="M827 757h9l-4.5 6z" fill="#222"/>
</svg>
<div class="a" style="left:1362px;top:198px;width:43px;height:43px;box-shadow:0 2px 8px rgba(0,0,0,0.2)"></div>
<div class="a" style="left:1361px;top:197px;width:45px;height:45px;background:#efefef;border:1px solid #7d7d7d"></div>
<div class="a" style="left:1369px;top:205px;width:29px;height:29px;background:#e4e6ea"></div>
<div class="a" style="left:1369px;top:212px;width:29px;text-align:center;font-size:12px;font-weight:bold;line-height:14px;color:#9ea1a7;transform:rotate(180deg);letter-spacing:-1px">TOP</div>
<div class="a" style="left:1350px;top:195px;font-size:11px;line-height:12px;color:#ff6f6f">X</div><div class="a" style="left:1358px;top:200px;width:3px;height:1px;background:#ff8080"></div>
<div class="a" style="left:1405px;top:189px;font-size:11px;line-height:12px;color:#5555ff;font-weight:bold">Z</div>
<div class="a" style="left:1398.5px;top:243px;font-size:11px;line-height:12px;color:#6fe86f">Y</div>
<!-- BOTTOM END -->
</body></html>
